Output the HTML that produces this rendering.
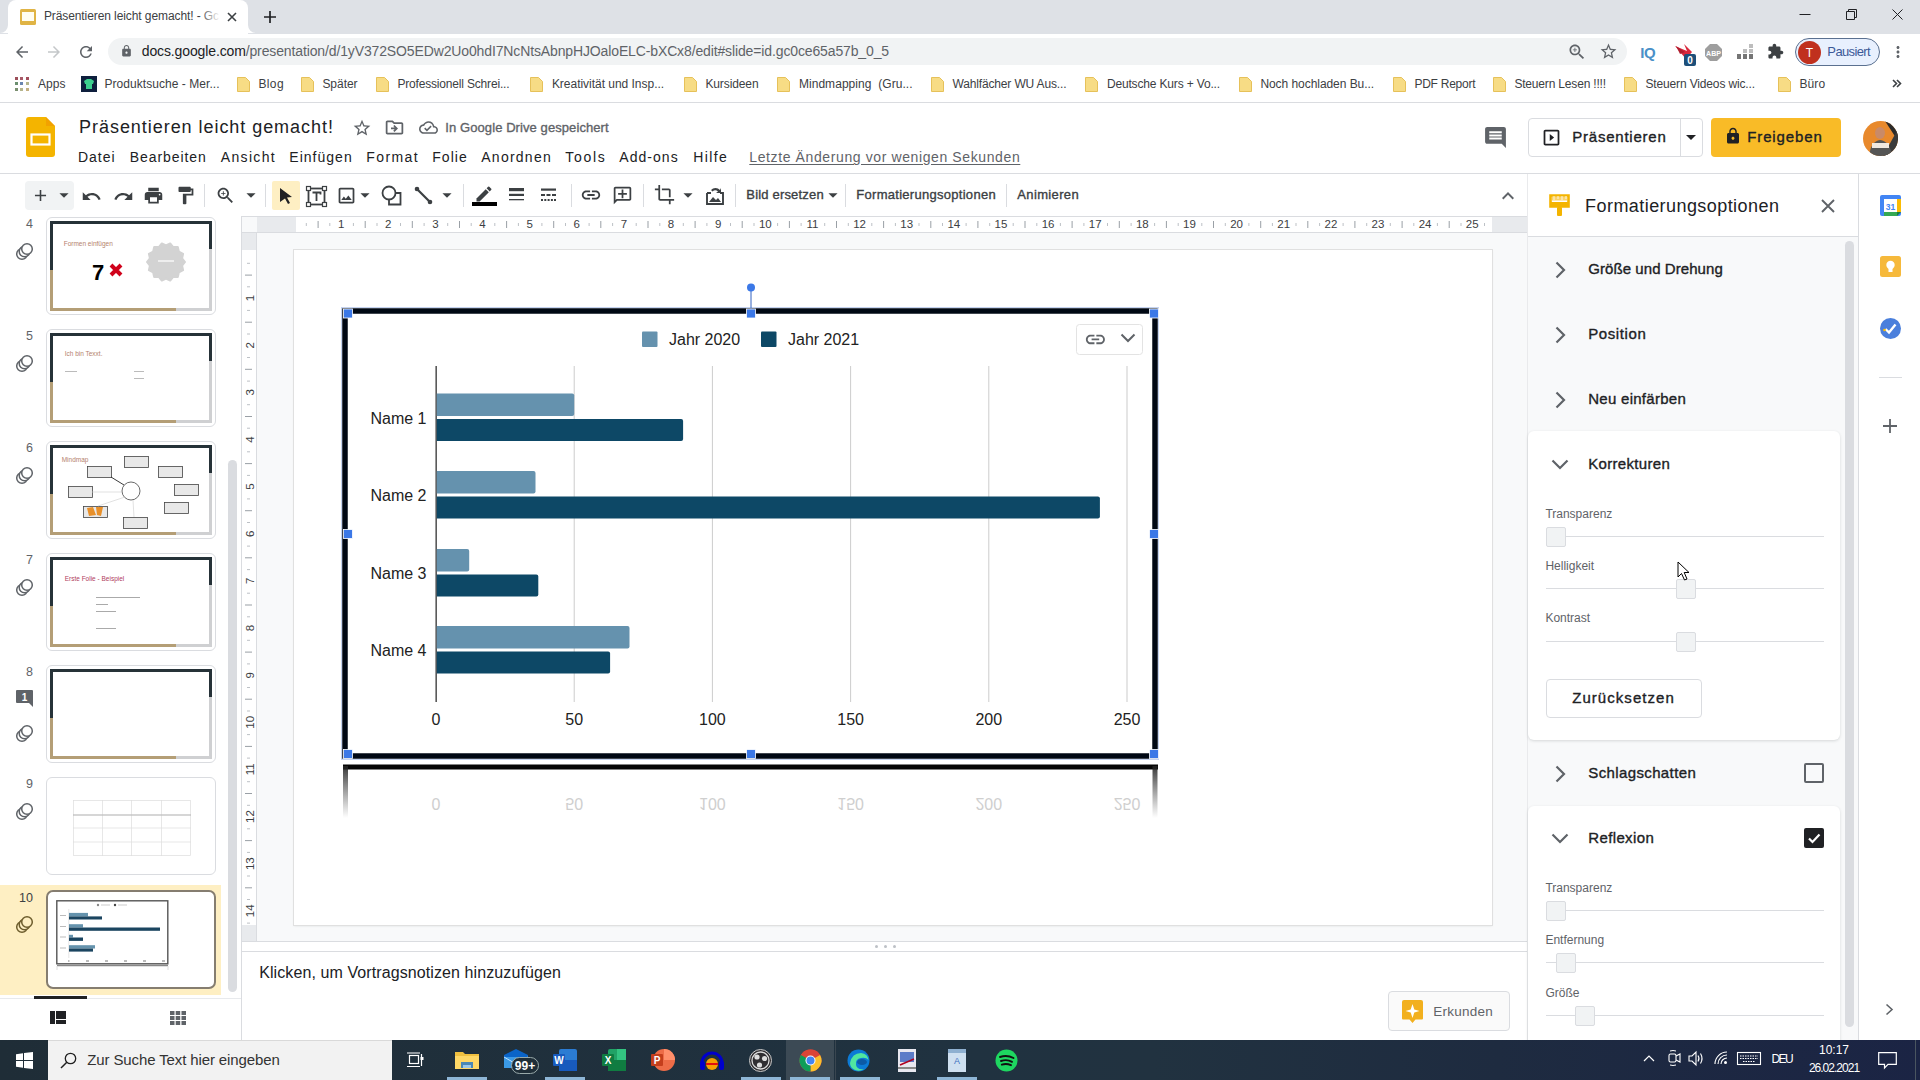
<!DOCTYPE html>
<html><head><meta charset="utf-8"><title>Slides</title>
<style>
*{margin:0;padding:0;box-sizing:border-box}
html,body{width:1920px;height:1080px;overflow:hidden;background:#fff;font-family:"Liberation Sans",sans-serif}
.a{position:absolute}
.t{position:absolute;white-space:pre;line-height:1.117em;font-family:"Liberation Sans",sans-serif}
svg{position:absolute;overflow:visible}
</style></head><body>

<div class="a" style="left:0px;top:0px;width:1920px;height:34px;background:#dee1e6"></div>
<div class="a" style="left:8px;top:0px;width:240px;height:34px;background:#fff;border-radius:8px 8px 0 0"></div>
<svg style="left:0px;top:25px" width="8" height="8"><path d="M8 0 V8 H0 A8 8 0 0 0 8 0z" fill="#fff"/></svg>
<svg style="left:248px;top:25px" width="8" height="8"><path d="M0 0 V8 H8 A8 8 0 0 1 0 0z" fill="#fff"/></svg>
<div class="a" style="left:20px;top:9px;width:16px;height:16px;background:#e0b445;border-radius:1.5px"></div>
<div class="a" style="left:22px;top:12px;width:12px;height:9px;background:#fffdf0"></div>
<div class="t" style='left:43.90px;top:10.14px;font-size:12px;color:#3c4043;letter-spacing:-0.090px;'>Präsentieren leicht gemacht! - Gc</div>
<div class="a" style="left:200px;top:8px;width:22px;height:18px;background:linear-gradient(90deg,rgba(255,255,255,0),#fff 90%)"></div>
<svg style="left:227px;top:12px" width="10" height="10" viewBox="0 0 10 10"><path d="M1 1L9 9M9 1L1 9" stroke="#3c4043" stroke-width="1.6"/></svg>
<svg style="left:263px;top:10px" width="14" height="14" viewBox="0 0 14 14"><path d="M7 1V13M1 7H13" stroke="#202124" stroke-width="1.7"/></svg>
<svg style="left:1799px;top:9px" width="13" height="11" viewBox="0 0 13 11"><path d="M0.5 5.5H11.5" stroke="#202124" stroke-width="1"/></svg>
<svg style="left:1846px;top:9px" width="11" height="11" viewBox="0 0 11 11"><path d="M0.5 2.5H8.5V10.5H0.5Z M2.5 2.5V0.5H10.5V8.5H8.5" stroke="#202124" stroke-width="1" fill="none"/></svg>
<svg style="left:1892px;top:9px" width="11" height="11" viewBox="0 0 11 11"><path d="M0.5 0.5L10.5 10.5M10.5 0.5L0.5 10.5" stroke="#202124" stroke-width="1"/></svg>
<svg style="left:13px;top:43px" width="18" height="18" viewBox="0 0 24 24"><path d="M20 11H7.83l5.59-5.59L12 4l-8 8 8 8 1.41-1.41L7.83 13H20v-2z" fill="#5f6368" /></svg>
<svg style="left:45px;top:43px" width="18" height="18" viewBox="0 0 24 24"><path d="M12 4l-1.41 1.41L16.17 11H4v2h12.17l-5.58 5.59L12 20l8-8z" fill="#c4c7c9" /></svg>
<svg style="left:77px;top:43px" width="18" height="18" viewBox="0 0 24 24"><path d="M17.65 6.35C16.2 4.9 14.21 4 12 4c-4.42 0-7.99 3.58-7.99 8s3.57 8 7.99 8c3.73 0 6.84-2.550 7.73-6h-2.08c-.82 2.33-3.04 4-5.65 4-3.31 0-6-2.69-6-6s2.69-6 6-6c1.66 0 3.14.69 4.22 1.78L13 11h7V4l-2.35 2.35z" fill="#5f6368" /></svg>
<div class="a" style="left:108px;top:38px;width:1519px;height:27px;background:#f1f3f4;border-radius:14px"></div>
<svg style="left:120px;top:44px" width="13" height="14" viewBox="0 0 24 24"><path d="M18 8h-1V6c0-2.76-2.24-5-5-5S7 3.24 7 6v2H6c-1.1 0-2 .9-2 2v10c0 1.1.9 2 2 2h12c1.1 0 2-.9 2-2V10c0-1.1-.9-2-2-2zm-6 9c-1.1 0-2-.9-2-2s.9-2 2-2 2 .9 2 2-.9 2-2 2zm3.1-9H8.9V6c0-1.71 1.39-3.1 3.1-3.1 1.71 0 3.1 1.39 3.1 3.1v2z" fill="#5f6368" /></svg>
<div class="t" style='left:141.80px;top:43.83px;font-size:14px;color:#5f6368;letter-spacing:-0.129px;'><span style="color:#202124">docs.google.com</span>/presentation/d/1yV372SO5EDw2Uo0hdI7NcNtsAbnpHJOaloELC-bXCx8/edit#slide=id.gc0ce65a57b_0_5</div>
<svg style="left:1567px;top:42px" width="20" height="20" viewBox="0 0 24 24"><path d="M15.5 14h-.79l-.28-.27C15.41 12.59 16 11.11 16 9.5 16 5.910 13.09 3 9.5 3S3 5.91 3 9.5 5.91 16 9.5 16c1.61 0 3.09-.59 4.23-1.57l.27.28v.79l5 4.99L20.49 19l-4.99-5zm-6 0C7.01 14 5 11.99 5 9.5S7.01 5 9.5 5 14 7.01 14 9.5 11.99 14 9.5 14zm2.5-4h-2v2H9v-2H7V9h2V7h1v2h2v1z" fill="#5f6368" /></svg>
<svg style="left:1599px;top:42px" width="19" height="19" viewBox="0 0 24 24"><path d="M22 9.24l-7.19-.62L12 2 9.19 8.63 2 9.24l5.46 4.73L5.82 21 12 17.27 18.18 21l-1.63-7.03L22 9.24zM12 15.4l-3.76 2.270 1-4.28-3.32-2.88 4.38-.38L12 6.1l1.71 4.04 4.38.38-3.32 2.88 1 4.28L12 15.4z" fill="#5f6368" /></svg>
<div class="t" style='left:1640.25px;top:44.92px;font-size:15px;color:#4a90c8;font-weight:700;letter-spacing:-0.344px;'>IQ</div>
<svg style="left:1673px;top:42px" width="26" height="26" viewBox="0 0 26 26"><path d="M2 4 L14 9 L11 2 L19 10 L13 17 Z" fill="#d9283c"/><path d="M3 4 L12 10 L7 12 Z" fill="#b01e2f"/><rect x="11" y="12" width="12" height="12" rx="2" fill="#1d4f79"/><text x="17" y="22" font-size="10" font-weight="700" fill="#fff" text-anchor="middle" font-family="Liberation Sans">0</text></svg>
<svg style="left:1705px;top:44px" width="17" height="17" viewBox="0 0 17 17"><path d="M5 0H12L17 5V12L12 17H5L0 12V5Z" fill="#9e9e9e"/><text x="8.5" y="11.5" font-size="7" font-weight="700" fill="#fff" text-anchor="middle" font-family="Liberation Sans">ABP</text></svg>
<svg style="left:1737px;top:44px" width="17" height="16" viewBox="0 0 17 16"><rect x="0" y="10" width="4" height="5" fill="#757575"/><rect x="6" y="10" width="4" height="5" fill="#757575"/><rect x="12" y="10" width="4" height="5" fill="#757575"/><rect x="6" y="5" width="4" height="4" fill="#bdbdbd"/><rect x="12" y="5" width="4" height="4" fill="#bdbdbd"/><rect x="12" y="0" width="4" height="4" fill="#bdbdbd"/></svg>
<svg style="left:1767px;top:43px" width="17" height="17" viewBox="0 0 24 24"><path d="M20.5 11H19V7c0-1.1-.9-2-2-2h-4V3.5C13 2.12 11.88 1 10.5 1S8 2.12 8 3.5V5H4c-1.1 0-1.99.9-1.99 2v3.8H3.5c1.49 0 2.7 1.21 2.7 2.7s-1.21 2.7-2.7 2.7H2V20c0 1.1.9 2 2 2h3.8v-1.5c0-1.49 1.21-2.7 2.7-2.7 1.49 0 2.7 1.21 2.7 2.7V22H17c1.1 0 2-.9 2-2v-4h1.5c1.38 0 2.5-1.12 2.5-2.5S21.88 11 20.5 11z" fill="#3c4043" /></svg>
<div class="a" style="left:1795px;top:38px;width:85px;height:28px;border:1px solid #5a7090;border-radius:14px;background:#e8f0fe"></div>
<div class="a" style="left:1798px;top:41px;width:23px;height:23px;border-radius:50%;background:#c0301e"></div>
<div class="t" style='left:1805.83px;top:46.64px;font-size:12px;color:#fff;'>T</div>
<div class="t" style='left:1827.35px;top:45.23px;font-size:13px;color:#3b5998;letter-spacing:-0.629px;'>Pausiert</div>
<svg style="left:1889px;top:43px" width="18" height="18" viewBox="0 0 24 24"><path d="M12 8c1.1 0 2-.9 2-2s-.9-2-2-2-2 .9-2 2 .9 2 2 2zm0 2c-1.1 0-2 .9-2 2s.9 2 2 2 2-.9 2-2-.9-2-2-2zm0 6c-1.1 0-2 .9-2 2s.9 2 2 2 2-.9 2-2-.9-2-2-2z" fill="#5f6368" /></svg>
<div class="a" style="left:0px;top:102px;width:1920px;height:1px;background:#dadce0"></div>
<div class="a" style="left:15px;top:77px;width:3px;height:3px;background:#9c4f5a"></div>
<div class="a" style="left:20px;top:77px;width:3px;height:3px;background:#a85a68"></div>
<div class="a" style="left:26px;top:77px;width:3px;height:3px;background:#a24e5c"></div>
<div class="a" style="left:15px;top:82px;width:3px;height:3px;background:#6b8f6f"></div>
<div class="a" style="left:20px;top:82px;width:3px;height:3px;background:#6a86b0"></div>
<div class="a" style="left:26px;top:82px;width:3px;height:3px;background:#b5b58c"></div>
<div class="a" style="left:15px;top:88px;width:3px;height:3px;background:#7a8f6f"></div>
<div class="a" style="left:20px;top:88px;width:3px;height:3px;background:#b5b58c"></div>
<div class="a" style="left:26px;top:88px;width:3px;height:3px;background:#c4b080"></div>
<div class="t" style='left:37.90px;top:77.64px;font-size:12px;color:#3c4043;letter-spacing:0.114px;'>Apps</div>
<div class="a" style="left:81px;top:76px;width:16px;height:16px;background:#0e1f3d"></div>
<svg style="left:81px;top:76px" width="16" height="16" viewBox="0 0 16 16"><path d="M3 5 L6 3 H10 L13 5 L12 8 H11 V13 H5 V8 H4Z" fill="#3ccf8e"/></svg>
<div class="t" style='left:104.40px;top:77.64px;font-size:12px;color:#3c4043;letter-spacing:0.058px;'>Produktsuche - Mer...</div>
<svg style="left:237px;top:77px" width="13" height="15" viewBox="0 0 13 15"><path d="M0.5 0.5H8.5L12.5 4.5V14.5H0.5Z" fill="#f7dc85" stroke="#e6c15a" stroke-width="1"/></svg>
<div class="t" style='left:258.40px;top:77.64px;font-size:12px;color:#3c4043;letter-spacing:0.390px;'>Blog</div>
<svg style="left:301px;top:77px" width="13" height="15" viewBox="0 0 13 15"><path d="M0.5 0.5H8.5L12.5 4.5V14.5H0.5Z" fill="#f7dc85" stroke="#e6c15a" stroke-width="1"/></svg>
<div class="t" style='left:322.40px;top:77.64px;font-size:12px;color:#3c4043;letter-spacing:-0.032px;'>Später</div>
<svg style="left:376px;top:77px" width="13" height="15" viewBox="0 0 13 15"><path d="M0.5 0.5H8.5L12.5 4.5V14.5H0.5Z" fill="#f7dc85" stroke="#e6c15a" stroke-width="1"/></svg>
<div class="t" style='left:397.40px;top:77.64px;font-size:12px;color:#3c4043;letter-spacing:-0.176px;'>Professionell Schrei...</div>
<svg style="left:530px;top:77px" width="13" height="15" viewBox="0 0 13 15"><path d="M0.5 0.5H8.5L12.5 4.5V14.5H0.5Z" fill="#f7dc85" stroke="#e6c15a" stroke-width="1"/></svg>
<div class="t" style='left:551.90px;top:77.64px;font-size:12px;color:#3c4043;letter-spacing:-0.024px;'>Kreativität und Insp...</div>
<svg style="left:684px;top:77px" width="13" height="15" viewBox="0 0 13 15"><path d="M0.5 0.5H8.5L12.5 4.5V14.5H0.5Z" fill="#f7dc85" stroke="#e6c15a" stroke-width="1"/></svg>
<div class="t" style='left:705.40px;top:77.64px;font-size:12px;color:#3c4043;letter-spacing:-0.106px;'>Kursideen</div>
<svg style="left:777px;top:77px" width="13" height="15" viewBox="0 0 13 15"><path d="M0.5 0.5H8.5L12.5 4.5V14.5H0.5Z" fill="#f7dc85" stroke="#e6c15a" stroke-width="1"/></svg>
<div class="t" style='left:798.90px;top:77.64px;font-size:12px;color:#3c4043;letter-spacing:0.052px;'>Mindmapping  (Gru...</div>
<svg style="left:931px;top:77px" width="13" height="15" viewBox="0 0 13 15"><path d="M0.5 0.5H8.5L12.5 4.5V14.5H0.5Z" fill="#f7dc85" stroke="#e6c15a" stroke-width="1"/></svg>
<div class="t" style='left:952.40px;top:77.64px;font-size:12px;color:#3c4043;letter-spacing:-0.144px;'>Wahlfächer WU Aus...</div>
<svg style="left:1085px;top:77px" width="13" height="15" viewBox="0 0 13 15"><path d="M0.5 0.5H8.5L12.5 4.5V14.5H0.5Z" fill="#f7dc85" stroke="#e6c15a" stroke-width="1"/></svg>
<div class="t" style='left:1106.90px;top:77.64px;font-size:12px;color:#3c4043;letter-spacing:-0.160px;'>Deutsche Kurs + Vo...</div>
<svg style="left:1239px;top:77px" width="13" height="15" viewBox="0 0 13 15"><path d="M0.5 0.5H8.5L12.5 4.5V14.5H0.5Z" fill="#f7dc85" stroke="#e6c15a" stroke-width="1"/></svg>
<div class="t" style='left:1260.40px;top:77.64px;font-size:12px;color:#3c4043;letter-spacing:-0.055px;'>Noch hochladen Bu...</div>
<svg style="left:1393px;top:77px" width="13" height="15" viewBox="0 0 13 15"><path d="M0.5 0.5H8.5L12.5 4.5V14.5H0.5Z" fill="#f7dc85" stroke="#e6c15a" stroke-width="1"/></svg>
<div class="t" style='left:1414.40px;top:77.64px;font-size:12px;color:#3c4043;letter-spacing:-0.240px;'>PDF Report</div>
<svg style="left:1493px;top:77px" width="13" height="15" viewBox="0 0 13 15"><path d="M0.5 0.5H8.5L12.5 4.5V14.5H0.5Z" fill="#f7dc85" stroke="#e6c15a" stroke-width="1"/></svg>
<div class="t" style='left:1514.40px;top:77.64px;font-size:12px;color:#3c4043;letter-spacing:-0.178px;'>Steuern Lesen !!!!</div>
<svg style="left:1624px;top:77px" width="13" height="15" viewBox="0 0 13 15"><path d="M0.5 0.5H8.5L12.5 4.5V14.5H0.5Z" fill="#f7dc85" stroke="#e6c15a" stroke-width="1"/></svg>
<div class="t" style='left:1645.40px;top:77.64px;font-size:12px;color:#3c4043;letter-spacing:-0.141px;'>Steuern Videos wic...</div>
<svg style="left:1778px;top:77px" width="13" height="15" viewBox="0 0 13 15"><path d="M0.5 0.5H8.5L12.5 4.5V14.5H0.5Z" fill="#f7dc85" stroke="#e6c15a" stroke-width="1"/></svg>
<div class="t" style='left:1799.40px;top:77.64px;font-size:12px;color:#3c4043;letter-spacing:0.114px;'>Büro</div>
<svg style="left:1892px;top:79px" width="10" height="9" viewBox="0 0 10 9"><path d="M1 1L4.5 4.5L1 8M5 1L8.5 4.5L5 8" stroke="#3c4043" stroke-width="1.6" fill="none"/></svg>
<svg style="left:26px;top:117px" width="29" height="40" viewBox="0 0 29 40"><path d="M0 3 Q0 0 3 0 H20 L29 9 V37 Q29 40 26 40 H3 Q0 40 0 37Z" fill="#f4b400"/><path d="M20 0 V9 H29Z" fill="#f09300" opacity="0.55"/><rect x="5.5" y="17.5" width="18" height="10" fill="none" stroke="#fff" stroke-width="2.2"/></svg>
<div class="t" style='left:79.10px;top:117.01px;font-size:18px;color:#202124;letter-spacing:0.951px;'>Präsentieren leicht gemacht!</div>
<svg style="left:352px;top:118px" width="20" height="20" viewBox="0 0 24 24"><path d="M22 9.24l-7.19-.62L12 2 9.19 8.63 2 9.24l5.46 4.73L5.82 21 12 17.27 18.18 21l-1.63-7.03L22 9.24zM12 15.4l-3.76 2.270 1-4.28-3.32-2.88 4.38-.38L12 6.1l1.71 4.04 4.38.38-3.32 2.88 1 4.28L12 15.4z" fill="#5f6368" /></svg>
<svg style="left:384px;top:117px" width="21" height="21" viewBox="0 0 24 24"><path d="M20 6h-8l-2-2H4c-1.1 0-1.99.9-1.99 2L2 18c0 1.1.9 2 2 2h16c1.1 0 2-.9 2-2V8c0-1.1-.9-2-2-2zm0 12H4V6h5.17l2 2H20v10zm-7.84-6H8v2h4.16l-1.59 1.59L11.99 17 16 13.01 11.99 9l-1.41 1.41L12.16 12z" fill="#5f6368" /></svg>
<svg style="left:419px;top:118px" width="19" height="19" viewBox="0 0 24 24"><path d="M19.35 10.04C18.67 6.59 15.64 4 12 4 9.11 4 6.6 5.64 5.35 8.04 2.34 8.36 0 10.91 0 14c0 3.31 2.69 6 6 6h13c2.76 0 5-2.24 5-5 0-2.64-2.05-4.78-4.65-4.96zM19 18H6c-2.21 0-4-1.79-4-4 0-2.05 1.53-3.76 3.56-3.97l1.07-.11.5-.95C8.08 7.14 9.94 6 12 6c2.62 0 4.88 1.86 5.39 4.43l.3 1.5 1.53.11c1.56.1 2.78 1.41 2.78 2.96 0 1.65-1.35 3-3 3zm-9-3.82l-2.09-2.09L6.5 13.5 10 17l6.01-6.01-1.41-1.41z" fill="#5f6368" /></svg>
<div class="t" style='left:445.35px;top:121.04px;font-size:13px;color:#5f6368;-webkit-text-stroke:0.35px #5f6368;letter-spacing:0.082px;'>In Google Drive gespeichert</div>
<div class="t" style='left:77.90px;top:150.13px;font-size:14px;color:#202124;letter-spacing:1.028px;'>Datei</div>
<div class="t" style='left:129.80px;top:150.13px;font-size:14px;color:#202124;letter-spacing:0.909px;'>Bearbeiten</div>
<div class="t" style='left:220.80px;top:150.13px;font-size:14px;color:#202124;letter-spacing:1.330px;'>Ansicht</div>
<div class="t" style='left:289.30px;top:150.13px;font-size:14px;color:#202124;letter-spacing:1.017px;'>Einfügen</div>
<div class="t" style='left:366.30px;top:150.13px;font-size:14px;color:#202124;letter-spacing:1.411px;'>Format</div>
<div class="t" style='left:432.30px;top:150.13px;font-size:14px;color:#202124;letter-spacing:1.010px;'>Folie</div>
<div class="t" style='left:481.30px;top:150.13px;font-size:14px;color:#202124;letter-spacing:1.240px;'>Anordnen</div>
<div class="t" style='left:565.30px;top:150.13px;font-size:14px;color:#202124;letter-spacing:1.678px;'>Tools</div>
<div class="t" style='left:619.30px;top:150.13px;font-size:14px;color:#202124;letter-spacing:1.041px;'>Add-ons</div>
<div class="t" style='left:693.30px;top:150.13px;font-size:14px;color:#202124;letter-spacing:1.346px;'>Hilfe</div>
<div class="t" style='left:749.30px;top:150.13px;font-size:14px;color:#5f6368;letter-spacing:0.609px;text-decoration:underline;text-underline-offset:2px'>Letzte Änderung vor wenigen Sekunden</div>
<svg style="left:1483px;top:125px" width="25" height="25" viewBox="0 0 24 24"><path d="M21.99 4c0-1.1-.89-2-1.99-2H4c-1.1 0-2 .9-2 2v12c0 1.1.9 2 2 2h14l4 4-.01-18zM18 14H6v-2h12v2zm0-3H6V9h12v2zm0-3H6V6h12v2z" fill="#5f6368" /></svg>
<div class="a" style="left:1528px;top:118px;width:175px;height:39px;border:1px solid #dadce0;border-radius:4px;background:#fff"></div>
<div class="a" style="left:1680px;top:119px;width:1px;height:37px;background:#dadce0"></div>
<svg style="left:1541px;top:127px" width="21" height="21" viewBox="0 0 24 24"><path d="M10 8v8l5-4-5-4zm9-5H5c-1.1 0-2 .9-2 2v14c0 1.1.9 2 2 2h14c1.1 0 2-.9 2-2V5c0-1.1-.9-2-2-2zm0 16H5V5h14v14z" fill="#202124" /></svg>
<div class="t" style='left:1572.25px;top:129.43px;font-size:15px;color:#202124;-webkit-text-stroke:0.35px #202124;letter-spacing:0.767px;'>Präsentieren</div>
<svg style="left:1679px;top:125px" width="24" height="24" viewBox="0 0 24 24"><path d="M7 10l5 5 5-5z" fill="#202124" /></svg>
<div class="a" style="left:1711px;top:118px;width:130px;height:39px;border-radius:4px;background:#f9bb27"></div>
<svg style="left:1724px;top:127px" width="18" height="18" viewBox="0 0 24 24"><path d="M18 8h-1V6c0-2.76-2.24-5-5-5S7 3.24 7 6v2H6c-1.1 0-2 .9-2 2v10c0 1.1.9 2 2 2h12c1.1 0 2-.9 2-2V10c0-1.1-.9-2-2-2zm-6 9c-1.1 0-2-.9-2-2s.9-2 2-2 2 .9 2 2-.9 2-2 2zm3.1-9H8.9V6c0-1.71 1.39-3.1 3.1-3.1 1.71 0 3.1 1.39 3.1 3.1v2z" fill="#202124" /></svg>
<div class="t" style='left:1747.25px;top:129.43px;font-size:15px;color:#202124;-webkit-text-stroke:0.35px #202124;letter-spacing:0.869px;'>Freigeben</div>
<svg style="left:1863px;top:121px" width="35" height="35" viewBox="0 0 35 35"><defs><clipPath id="av"><circle cx="17.5" cy="17.5" r="17.5"/></clipPath></defs><g clip-path="url(#av)"><rect width="35" height="35" fill="#e8892c"/><path d="M22 0 L35 0 L35 20 Z" fill="#2a2a2a"/><path d="M35 8 L35 35 L20 35 Z" fill="#3a3a3a"/><ellipse cx="17" cy="12" rx="5" ry="6" fill="#c98a68"/><path d="M6 35 Q8 20 17 19 Q27 20 29 35Z" fill="#555"/><rect x="9" y="22" width="17" height="5" fill="#f0e8e0"/></g></svg>
<div class="a" style="left:0px;top:173px;width:1920px;height:1px;background:#dadce0"></div>
<div class="a" style="left:25px;top:181px;width:49px;height:29px;background:#f1f3f4;border-radius:4px"></div>
<svg style="left:31px;top:186px" width="19" height="19" viewBox="0 0 24 24"><path d="M19 13h-6v6h-2v-6H5v-2h6V5h2v6h6v2z" fill="#3c4043" /></svg>
<svg style="left:53px;top:184px" width="22" height="22" viewBox="0 0 24 24"><path d="M7 10l5 5 5-5z" fill="#3c4043" /></svg>
<svg style="left:81px;top:186px" width="21" height="21" viewBox="0 0 24 24"><path d="M12.5 8c-2.65 0-5.05.99-6.9 2.6L2 7v9h9l-3.62-3.62c1.39-1.16 3.16-1.88 5.12-1.88 3.54 0 6.55 2.31 7.6 5.5l2.37-.78C21.08 11.03 17.15 8 12.5 8z" fill="#3c4043" /></svg>
<svg style="left:113px;top:186px" width="21" height="21" viewBox="0 0 24 24"><path d="M18.4 10.6C16.55 8.99 14.15 8 11.5 8c-4.65 0-8.58 3.03-9.96 7.22L3.9 16c1.05-3.19 4.05-5.5 7.6-5.5 1.95 0 3.73.72 5.12 1.88L13 16h9V7l-3.6 3.6z" fill="#3c4043" /></svg>
<svg style="left:143px;top:185px" width="21" height="21" viewBox="0 0 24 24"><path d="M19 8H5c-1.66 0-3 1.34-3 3v6h4v4h12v-4h4v-6c0-1.66-1.34-3-3-3zm-3 11H8v-5h8v5zm3-7c-.55 0-1-.45-1-1s.45-1 1-1 1 .45 1 1-.45 1-1 1zm-1-9H6v4h12V3z" fill="#3c4043" /></svg>
<svg style="left:175px;top:185px" width="21" height="21" viewBox="0 0 24 24"><path d="M18 4V3c0-.55-.45-1-1-1H5c-.55 0-1 .45-1 1v4c0 .55.45 1 1 1h12c.55 0 1-.45 1-1V6h1v4H9v11c0 .55.45 1 1 1h2c.55 0 1-.45 1-1v-9h8V4h-3z" fill="#3c4043" /></svg>
<div class="a" style="left:204px;top:184px;width:1px;height:23px;background:#dadce0"></div>
<svg style="left:215px;top:185px" width="21" height="21" viewBox="0 0 24 24"><path d="M15.5 14h-.79l-.28-.27C15.41 12.59 16 11.11 16 9.5 16 5.910 13.09 3 9.5 3S3 5.91 3 9.5 5.91 16 9.5 16c1.61 0 3.09-.59 4.23-1.57l.27.28v.79l5 4.99L20.49 19l-4.99-5zm-6 0C7.01 14 5 11.99 5 9.5S7.01 5 9.5 5 14 7.01 14 9.5 11.99 14 9.5 14zm2.5-4h-2v2H9v-2H7V9h2V7h1v2h2v1z" fill="#3c4043" /></svg>
<svg style="left:240px;top:184px" width="22" height="22" viewBox="0 0 24 24"><path d="M7 10l5 5 5-5z" fill="#3c4043" /></svg>
<div class="a" style="left:265px;top:184px;width:1px;height:23px;background:#dadce0"></div>
<div class="a" style="left:272px;top:181px;width:28px;height:29px;background:#feefc3;border-radius:2px"></div>
<svg style="left:279px;top:187px" width="14" height="17" viewBox="0 0 14 17"><path d="M1 1 L13 10 L8 10.5 L11 16 L9 17 L6 11.5 L1 15Z" fill="#202124"/></svg>
<svg style="left:306px;top:186px" width="21" height="21" viewBox="0 0 21 21"><rect x="2.5" y="2.5" width="16" height="16" fill="none" stroke="#3c4043" stroke-width="1.8"/><rect x="0.5" y="0.5" width="4" height="4" fill="#fff" stroke="#3c4043" stroke-width="1.2"/><rect x="16.5" y="0.5" width="4" height="4" fill="#fff" stroke="#3c4043" stroke-width="1.2"/><rect x="0.5" y="16.5" width="4" height="4" fill="#fff" stroke="#3c4043" stroke-width="1.2"/><rect x="16.5" y="16.5" width="4" height="4" fill="#fff" stroke="#3c4043" stroke-width="1.2"/><path d="M6.5 6.5H14.5V8.5M10.5 6.5V15" stroke="#3c4043" stroke-width="1.8" fill="none"/></svg>
<svg style="left:336px;top:185px" width="21" height="21" viewBox="0 0 24 24"><path d="M19 5v14H5V5h14m0-2H5c-1.1 0-2 .9-2 2v14c0 1.1.9 2 2 2h14c1.1 0 2-.9 2-2V5c0-1.1-.9-2-2-2zm-4.86 8.86l-3 3.87L9 13.14 6 17h12l-3.86-5.14z" fill="#3c4043" /></svg>
<svg style="left:354px;top:184px" width="22" height="22" viewBox="0 0 24 24"><path d="M7 10l5 5 5-5z" fill="#3c4043" /></svg>
<svg style="left:381px;top:185px" width="21" height="21" viewBox="0 0 21 21"><circle cx="8" cy="8" r="6.5" fill="none" stroke="#3c4043" stroke-width="1.8"/><path d="M8 14.5 V19.5 H19.5 V8 H14.5" fill="none" stroke="#3c4043" stroke-width="1.8"/></svg>
<svg style="left:414px;top:186px" width="19" height="19" viewBox="0 0 19 19"><path d="M3 3 L16 16" stroke="#3c4043" stroke-width="2.2"/><circle cx="3" cy="3" r="2.3" fill="#3c4043"/><circle cx="16" cy="16" r="2.3" fill="#3c4043"/></svg>
<svg style="left:436px;top:184px" width="22" height="22" viewBox="0 0 24 24"><path d="M7 10l5 5 5-5z" fill="#3c4043" /></svg>
<div class="a" style="left:463px;top:184px;width:1px;height:23px;background:#dadce0"></div>
<svg style="left:474px;top:184px" width="20" height="20" viewBox="0 0 24 24"><path d="M3 17.25V21h3.75L17.81 9.94l-3.75-3.75L3 17.25z" fill="#3c4043" /></svg>
<svg style="left:474px;top:184px" width="20" height="20" viewBox="0 0 24 24"><path d="M20.71 7.04a.996.996 0 0 0 0-1.41l-2.34-2.34a.996.996 0 0 0-1.41 0l-1.83 1.83 3.75 3.75 1.83-1.83z" fill="#3c4043"/></svg>
<div class="a" style="left:472px;top:202px;width:25px;height:4px;background:#000"></div>
<svg style="left:506px;top:184px" width="21" height="21" viewBox="0 0 21 21"><rect x="3" y="4" width="15" height="3.2" fill="#3c4043"/><rect x="3" y="9.8" width="15" height="2.2" fill="#3c4043"/><rect x="3" y="15" width="15" height="1.3" fill="#3c4043"/></svg>
<svg style="left:538px;top:184px" width="21" height="21" viewBox="0 0 21 21"><rect x="3" y="4.5" width="15" height="2.2" fill="#3c4043"/><g fill="#3c4043"><rect x="3" y="10" width="4" height="2"/><rect x="8.5" y="10" width="4" height="2"/><rect x="14" y="10" width="4" height="2"/><rect x="3" y="15" width="2" height="2"/><rect x="6.3" y="15" width="2" height="2"/><rect x="9.6" y="15" width="2" height="2"/><rect x="12.9" y="15" width="2" height="2"/><rect x="16" y="15" width="2" height="2"/></g></svg>
<div class="a" style="left:571px;top:184px;width:1px;height:23px;background:#dadce0"></div>
<svg style="left:580px;top:184px" width="22" height="22" viewBox="0 0 24 24"><path d="M3.9 12c0-1.71 1.39-3.1 3.1-3.1h4V7H7c-2.76 0-5 2.24-5 5s2.24 5 5 5h4v-1.9H7c-1.71 0-3.1-1.39-3.1-3.1zM8 13h8v-2H8v2zm9-6h-4v1.9h4c1.71 0 3.1 1.39 3.1 3.1s-1.39 3.1-3.1 3.1h-4V17h4c2.76 0 5-2.24 5-5s-2.24-5-5-5z" fill="#3c4043" /></svg>
<svg style="left:612px;top:185px" width="21" height="21" viewBox="0 0 24 24"><g transform="translate(24,0) scale(-1,1)"><path d="M22 4c0-1.1-.9-2-2-2H4c-1.1 0-1.99.9-1.99 2L2 16c0 1.1.9 2 2 2h14l4 4V4zm-2 13.17L18.83 16H4V4h16v13.17zM13 5h-2v4H7v2h4v4h2v-4h4V9h-4z" fill="#3c4043"/></g></svg>
<div class="a" style="left:643px;top:184px;width:1px;height:23px;background:#dadce0"></div>
<svg style="left:654px;top:184px" width="21" height="21" viewBox="0 0 24 24"><path d="M17 15h2V7c0-1.1-.9-2-2-2H9v2h8v8zM7 17V1H5v4H1v2h4v10c0 1.1.9 2 2 2h10v4h2v-4h4v-2H7z" fill="#3c4043" /></svg>
<svg style="left:677px;top:184px" width="22" height="22" viewBox="0 0 24 24"><path d="M7 10l5 5 5-5z" fill="#3c4043" /></svg>
<svg style="left:704px;top:185px" width="21" height="21" viewBox="0 0 21 21"><path d="M3 8 V19 H19 V8 H16 M3 8 H7" fill="none" stroke="#3c4043" stroke-width="1.9"/><path d="M5 17 L9 12 L12 15 L14 13 L17 17Z" fill="#3c4043"/><path d="M7 5 A6 6 0 0 1 16 5 L17 3 V8 H12 L14 6.5 A4 4 0 0 0 8.5 6.5" fill="#3c4043"/></svg>
<div class="a" style="left:735px;top:184px;width:1px;height:23px;background:#dadce0"></div>
<div class="t" style='left:746.35px;top:188.24px;font-size:13px;color:#3c4043;-webkit-text-stroke:0.35px #3c4043;letter-spacing:0.179px;'>Bild ersetzen</div>
<svg style="left:822px;top:184px" width="22" height="22" viewBox="0 0 24 24"><path d="M7 10l5 5 5-5z" fill="#3c4043" /></svg>
<div class="a" style="left:845px;top:184px;width:1px;height:23px;background:#dadce0"></div>
<div class="t" style='left:856.35px;top:188.24px;font-size:13px;color:#3c4043;-webkit-text-stroke:0.35px #3c4043;letter-spacing:0.280px;'>Formatierungsoptionen</div>
<div class="a" style="left:1006px;top:184px;width:1px;height:23px;background:#dadce0"></div>
<div class="t" style='left:1017.35px;top:188.24px;font-size:13px;color:#3c4043;-webkit-text-stroke:0.35px #3c4043;letter-spacing:0.346px;'>Animieren</div>
<svg style="left:1496px;top:184px" width="24" height="24" viewBox="0 0 24 24"><path d="M12 8l-6 6 1.41 1.41L12 10.83l4.59 4.58L18 14z" fill="#5f6368" /></svg>
<div class="a" style="left:242px;top:216px;width:1286px;height:725px;background:#f8f9fa"></div>
<div class="a" style="left:242px;top:216px;width:1286px;height:17px;background:#fff;border-top:1px solid #dadce0;border-bottom:1px solid #dadce0"></div>
<div class="a" style="left:257px;top:217px;width:39px;height:15px;background:#e8eaed"></div>
<div class="a" style="left:1492px;top:217px;width:36px;height:15px;background:#e8eaed"></div>
<div class="a" style="left:242px;top:217px;width:15px;height:15px;background:#f8f9fa"></div>
<div class="a" style="left:241px;top:233px;width:16px;height:708px;background:#fff;border-right:1px solid #dadce0;border-left:1px solid #dadce0"></div>
<div class="a" style="left:242px;top:233px;width:14px;height:17px;background:#e8eaed"></div>
<div class="a" style="left:242px;top:925px;width:14px;height:16px;background:#e8eaed"></div>
<svg style="left:0;top:0" width="1920" height="1080"><rect x="305.8" y="223" width="1" height="3" fill="#bdc1c6"/><rect x="317.6" y="221" width="1" height="7" fill="#9aa0a6"/><rect x="329.3" y="223" width="1" height="3" fill="#bdc1c6"/><text x="341.1" y="228.2" font-size="11.5" fill="#3c4043" text-anchor="middle" font-family="Liberation Sans">1</text><rect x="352.9" y="223" width="1" height="3" fill="#bdc1c6"/><rect x="364.7" y="221" width="1" height="7" fill="#9aa0a6"/><rect x="376.5" y="223" width="1" height="3" fill="#bdc1c6"/><text x="388.3" y="228.2" font-size="11.5" fill="#3c4043" text-anchor="middle" font-family="Liberation Sans">2</text><rect x="400.0" y="223" width="1" height="3" fill="#bdc1c6"/><rect x="411.8" y="221" width="1" height="7" fill="#9aa0a6"/><rect x="423.6" y="223" width="1" height="3" fill="#bdc1c6"/><text x="435.4" y="228.2" font-size="11.5" fill="#3c4043" text-anchor="middle" font-family="Liberation Sans">3</text><rect x="447.2" y="223" width="1" height="3" fill="#bdc1c6"/><rect x="459.0" y="221" width="1" height="7" fill="#9aa0a6"/><rect x="470.7" y="223" width="1" height="3" fill="#bdc1c6"/><text x="482.5" y="228.2" font-size="11.5" fill="#3c4043" text-anchor="middle" font-family="Liberation Sans">4</text><rect x="494.3" y="223" width="1" height="3" fill="#bdc1c6"/><rect x="506.1" y="221" width="1" height="7" fill="#9aa0a6"/><rect x="517.9" y="223" width="1" height="3" fill="#bdc1c6"/><text x="529.6" y="228.2" font-size="11.5" fill="#3c4043" text-anchor="middle" font-family="Liberation Sans">5</text><rect x="541.4" y="223" width="1" height="3" fill="#bdc1c6"/><rect x="553.2" y="221" width="1" height="7" fill="#9aa0a6"/><rect x="565.0" y="223" width="1" height="3" fill="#bdc1c6"/><text x="576.8" y="228.2" font-size="11.5" fill="#3c4043" text-anchor="middle" font-family="Liberation Sans">6</text><rect x="588.6" y="223" width="1" height="3" fill="#bdc1c6"/><rect x="600.3" y="221" width="1" height="7" fill="#9aa0a6"/><rect x="612.1" y="223" width="1" height="3" fill="#bdc1c6"/><text x="623.9" y="228.2" font-size="11.5" fill="#3c4043" text-anchor="middle" font-family="Liberation Sans">7</text><rect x="635.7" y="223" width="1" height="3" fill="#bdc1c6"/><rect x="647.5" y="221" width="1" height="7" fill="#9aa0a6"/><rect x="659.3" y="223" width="1" height="3" fill="#bdc1c6"/><text x="671.0" y="228.2" font-size="11.5" fill="#3c4043" text-anchor="middle" font-family="Liberation Sans">8</text><rect x="682.8" y="223" width="1" height="3" fill="#bdc1c6"/><rect x="694.6" y="221" width="1" height="7" fill="#9aa0a6"/><rect x="706.4" y="223" width="1" height="3" fill="#bdc1c6"/><text x="718.2" y="228.2" font-size="11.5" fill="#3c4043" text-anchor="middle" font-family="Liberation Sans">9</text><rect x="730.0" y="223" width="1" height="3" fill="#bdc1c6"/><rect x="741.7" y="221" width="1" height="7" fill="#9aa0a6"/><rect x="753.5" y="223" width="1" height="3" fill="#bdc1c6"/><text x="765.3" y="228.2" font-size="11.5" fill="#3c4043" text-anchor="middle" font-family="Liberation Sans">10</text><rect x="777.1" y="223" width="1" height="3" fill="#bdc1c6"/><rect x="788.9" y="221" width="1" height="7" fill="#9aa0a6"/><rect x="800.6" y="223" width="1" height="3" fill="#bdc1c6"/><text x="812.4" y="228.2" font-size="11.5" fill="#3c4043" text-anchor="middle" font-family="Liberation Sans">11</text><rect x="824.2" y="223" width="1" height="3" fill="#bdc1c6"/><rect x="836.0" y="221" width="1" height="7" fill="#9aa0a6"/><rect x="847.8" y="223" width="1" height="3" fill="#bdc1c6"/><text x="859.6" y="228.2" font-size="11.5" fill="#3c4043" text-anchor="middle" font-family="Liberation Sans">12</text><rect x="871.3" y="223" width="1" height="3" fill="#bdc1c6"/><rect x="883.1" y="221" width="1" height="7" fill="#9aa0a6"/><rect x="894.9" y="223" width="1" height="3" fill="#bdc1c6"/><text x="906.7" y="228.2" font-size="11.5" fill="#3c4043" text-anchor="middle" font-family="Liberation Sans">13</text><rect x="918.5" y="223" width="1" height="3" fill="#bdc1c6"/><rect x="930.3" y="221" width="1" height="7" fill="#9aa0a6"/><rect x="942.0" y="223" width="1" height="3" fill="#bdc1c6"/><text x="953.8" y="228.2" font-size="11.5" fill="#3c4043" text-anchor="middle" font-family="Liberation Sans">14</text><rect x="965.6" y="223" width="1" height="3" fill="#bdc1c6"/><rect x="977.4" y="221" width="1" height="7" fill="#9aa0a6"/><rect x="989.2" y="223" width="1" height="3" fill="#bdc1c6"/><text x="1001.0" y="228.2" font-size="11.5" fill="#3c4043" text-anchor="middle" font-family="Liberation Sans">15</text><rect x="1012.7" y="223" width="1" height="3" fill="#bdc1c6"/><rect x="1024.5" y="221" width="1" height="7" fill="#9aa0a6"/><rect x="1036.3" y="223" width="1" height="3" fill="#bdc1c6"/><text x="1048.1" y="228.2" font-size="11.5" fill="#3c4043" text-anchor="middle" font-family="Liberation Sans">16</text><rect x="1059.9" y="223" width="1" height="3" fill="#bdc1c6"/><rect x="1071.6" y="221" width="1" height="7" fill="#9aa0a6"/><rect x="1083.4" y="223" width="1" height="3" fill="#bdc1c6"/><text x="1095.2" y="228.2" font-size="11.5" fill="#3c4043" text-anchor="middle" font-family="Liberation Sans">17</text><rect x="1107.0" y="223" width="1" height="3" fill="#bdc1c6"/><rect x="1118.8" y="221" width="1" height="7" fill="#9aa0a6"/><rect x="1130.6" y="223" width="1" height="3" fill="#bdc1c6"/><text x="1142.3" y="228.2" font-size="11.5" fill="#3c4043" text-anchor="middle" font-family="Liberation Sans">18</text><rect x="1154.1" y="223" width="1" height="3" fill="#bdc1c6"/><rect x="1165.9" y="221" width="1" height="7" fill="#9aa0a6"/><rect x="1177.7" y="223" width="1" height="3" fill="#bdc1c6"/><text x="1189.5" y="228.2" font-size="11.5" fill="#3c4043" text-anchor="middle" font-family="Liberation Sans">19</text><rect x="1201.3" y="223" width="1" height="3" fill="#bdc1c6"/><rect x="1213.0" y="221" width="1" height="7" fill="#9aa0a6"/><rect x="1224.8" y="223" width="1" height="3" fill="#bdc1c6"/><text x="1236.6" y="228.2" font-size="11.5" fill="#3c4043" text-anchor="middle" font-family="Liberation Sans">20</text><rect x="1248.4" y="223" width="1" height="3" fill="#bdc1c6"/><rect x="1260.2" y="221" width="1" height="7" fill="#9aa0a6"/><rect x="1271.9" y="223" width="1" height="3" fill="#bdc1c6"/><text x="1283.7" y="228.2" font-size="11.5" fill="#3c4043" text-anchor="middle" font-family="Liberation Sans">21</text><rect x="1295.5" y="223" width="1" height="3" fill="#bdc1c6"/><rect x="1307.3" y="221" width="1" height="7" fill="#9aa0a6"/><rect x="1319.1" y="223" width="1" height="3" fill="#bdc1c6"/><text x="1330.9" y="228.2" font-size="11.5" fill="#3c4043" text-anchor="middle" font-family="Liberation Sans">22</text><rect x="1342.6" y="223" width="1" height="3" fill="#bdc1c6"/><rect x="1354.4" y="221" width="1" height="7" fill="#9aa0a6"/><rect x="1366.2" y="223" width="1" height="3" fill="#bdc1c6"/><text x="1378.0" y="228.2" font-size="11.5" fill="#3c4043" text-anchor="middle" font-family="Liberation Sans">23</text><rect x="1389.8" y="223" width="1" height="3" fill="#bdc1c6"/><rect x="1401.6" y="221" width="1" height="7" fill="#9aa0a6"/><rect x="1413.3" y="223" width="1" height="3" fill="#bdc1c6"/><text x="1425.1" y="228.2" font-size="11.5" fill="#3c4043" text-anchor="middle" font-family="Liberation Sans">24</text><rect x="1436.9" y="223" width="1" height="3" fill="#bdc1c6"/><rect x="1448.7" y="221" width="1" height="7" fill="#9aa0a6"/><rect x="1460.5" y="223" width="1" height="3" fill="#bdc1c6"/><text x="1472.2" y="228.2" font-size="11.5" fill="#3c4043" text-anchor="middle" font-family="Liberation Sans">25</text><rect x="1484.0" y="223" width="1" height="3" fill="#bdc1c6"/></svg>
<svg style="left:0;top:0" width="1920" height="1080"><rect x="247" y="262.8" width="3" height="1" fill="#bdc1c6"/><rect x="245" y="274.6" width="7" height="1" fill="#9aa0a6"/><rect x="247" y="286.3" width="3" height="1" fill="#bdc1c6"/><text x="0" y="0" transform="translate(254,298.1) rotate(-90)" font-size="11.5" fill="#3c4043" text-anchor="middle" font-family="Liberation Sans">1</text><rect x="247" y="309.9" width="3" height="1" fill="#bdc1c6"/><rect x="245" y="321.7" width="7" height="1" fill="#9aa0a6"/><rect x="247" y="333.5" width="3" height="1" fill="#bdc1c6"/><text x="0" y="0" transform="translate(254,345.3) rotate(-90)" font-size="11.5" fill="#3c4043" text-anchor="middle" font-family="Liberation Sans">2</text><rect x="247" y="357.0" width="3" height="1" fill="#bdc1c6"/><rect x="245" y="368.8" width="7" height="1" fill="#9aa0a6"/><rect x="247" y="380.6" width="3" height="1" fill="#bdc1c6"/><text x="0" y="0" transform="translate(254,392.4) rotate(-90)" font-size="11.5" fill="#3c4043" text-anchor="middle" font-family="Liberation Sans">3</text><rect x="247" y="404.2" width="3" height="1" fill="#bdc1c6"/><rect x="245" y="416.0" width="7" height="1" fill="#9aa0a6"/><rect x="247" y="427.7" width="3" height="1" fill="#bdc1c6"/><text x="0" y="0" transform="translate(254,439.5) rotate(-90)" font-size="11.5" fill="#3c4043" text-anchor="middle" font-family="Liberation Sans">4</text><rect x="247" y="451.3" width="3" height="1" fill="#bdc1c6"/><rect x="245" y="463.1" width="7" height="1" fill="#9aa0a6"/><rect x="247" y="474.9" width="3" height="1" fill="#bdc1c6"/><text x="0" y="0" transform="translate(254,486.6) rotate(-90)" font-size="11.5" fill="#3c4043" text-anchor="middle" font-family="Liberation Sans">5</text><rect x="247" y="498.4" width="3" height="1" fill="#bdc1c6"/><rect x="245" y="510.2" width="7" height="1" fill="#9aa0a6"/><rect x="247" y="522.0" width="3" height="1" fill="#bdc1c6"/><text x="0" y="0" transform="translate(254,533.8) rotate(-90)" font-size="11.5" fill="#3c4043" text-anchor="middle" font-family="Liberation Sans">6</text><rect x="247" y="545.6" width="3" height="1" fill="#bdc1c6"/><rect x="245" y="557.3" width="7" height="1" fill="#9aa0a6"/><rect x="247" y="569.1" width="3" height="1" fill="#bdc1c6"/><text x="0" y="0" transform="translate(254,580.9) rotate(-90)" font-size="11.5" fill="#3c4043" text-anchor="middle" font-family="Liberation Sans">7</text><rect x="247" y="592.7" width="3" height="1" fill="#bdc1c6"/><rect x="245" y="604.5" width="7" height="1" fill="#9aa0a6"/><rect x="247" y="616.3" width="3" height="1" fill="#bdc1c6"/><text x="0" y="0" transform="translate(254,628.0) rotate(-90)" font-size="11.5" fill="#3c4043" text-anchor="middle" font-family="Liberation Sans">8</text><rect x="247" y="639.8" width="3" height="1" fill="#bdc1c6"/><rect x="245" y="651.6" width="7" height="1" fill="#9aa0a6"/><rect x="247" y="663.4" width="3" height="1" fill="#bdc1c6"/><text x="0" y="0" transform="translate(254,675.2) rotate(-90)" font-size="11.5" fill="#3c4043" text-anchor="middle" font-family="Liberation Sans">9</text><rect x="247" y="687.0" width="3" height="1" fill="#bdc1c6"/><rect x="245" y="698.7" width="7" height="1" fill="#9aa0a6"/><rect x="247" y="710.5" width="3" height="1" fill="#bdc1c6"/><text x="0" y="0" transform="translate(254,722.3) rotate(-90)" font-size="11.5" fill="#3c4043" text-anchor="middle" font-family="Liberation Sans">10</text><rect x="247" y="734.1" width="3" height="1" fill="#bdc1c6"/><rect x="245" y="745.9" width="7" height="1" fill="#9aa0a6"/><rect x="247" y="757.6" width="3" height="1" fill="#bdc1c6"/><text x="0" y="0" transform="translate(254,769.4) rotate(-90)" font-size="11.5" fill="#3c4043" text-anchor="middle" font-family="Liberation Sans">11</text><rect x="247" y="781.2" width="3" height="1" fill="#bdc1c6"/><rect x="245" y="793.0" width="7" height="1" fill="#9aa0a6"/><rect x="247" y="804.8" width="3" height="1" fill="#bdc1c6"/><text x="0" y="0" transform="translate(254,816.6) rotate(-90)" font-size="11.5" fill="#3c4043" text-anchor="middle" font-family="Liberation Sans">12</text><rect x="247" y="828.3" width="3" height="1" fill="#bdc1c6"/><rect x="245" y="840.1" width="7" height="1" fill="#9aa0a6"/><rect x="247" y="851.9" width="3" height="1" fill="#bdc1c6"/><text x="0" y="0" transform="translate(254,863.7) rotate(-90)" font-size="11.5" fill="#3c4043" text-anchor="middle" font-family="Liberation Sans">13</text><rect x="247" y="875.5" width="3" height="1" fill="#bdc1c6"/><rect x="245" y="887.3" width="7" height="1" fill="#9aa0a6"/><rect x="247" y="899.0" width="3" height="1" fill="#bdc1c6"/><text x="0" y="0" transform="translate(254,910.8) rotate(-90)" font-size="11.5" fill="#3c4043" text-anchor="middle" font-family="Liberation Sans">14</text><rect x="247" y="922.6" width="3" height="1" fill="#bdc1c6"/></svg>
<div class="a" style="left:294px;top:250px;width:1198px;height:675px;background:#fff;box-shadow:0 0 0 1px #e0e0e0, 0 1px 2px rgba(60,64,67,.15)"></div>
<div class="a" style="left:242px;top:941px;width:1286px;height:1px;background:#dadce0"></div>
<div class="a" style="left:242px;top:951px;width:1286px;height:1px;background:#dadce0"></div>
<div class="a" style="left:874.5px;top:944.5px;width:3px;height:3px;background:#bdc1c6;border-radius:50%"></div>
<div class="a" style="left:883.5px;top:944.5px;width:3px;height:3px;background:#bdc1c6;border-radius:50%"></div>
<div class="a" style="left:892.5px;top:944.5px;width:3px;height:3px;background:#bdc1c6;border-radius:50%"></div>
<div class="t" style='left:259.20px;top:963.52px;font-size:16px;color:#202124;letter-spacing:0.094px;'>Klicken, um Vortragsnotizen hinzuzufügen</div>
<div class="a" style="left:1388px;top:991px;width:122px;height:40px;border:1px solid #dadce0;border-radius:4px;background:#fafafa"></div>
<svg style="left:1402px;top:1000px" width="21" height="24" viewBox="0 0 21 24"><path d="M2 0 H19 Q21 0 21 2 V18.5 Q21 19.5 20 19.5 H13.5 L10.5 23 L7.5 19.5 H1 Q0 19.5 0 18.5 V2 Q0 0 2 0Z" fill="#f2b01e"/><path d="M10.5 4 L12.3 9.5 L17.5 11 L12.3 12.5 L10.5 18 L8.7 12.5 L3.5 11 L8.7 9.5Z" fill="#fff"/></svg>
<div class="t" style='left:1433.33px;top:1003.78px;font-size:13.5px;color:#5f6368;letter-spacing:0.222px;'>Erkunden</div>
<svg style="left:0;top:0" width="1920" height="1080"><rect x="573.7" y="366" width="1" height="336" fill="#cccccc"/><rect x="711.9" y="366" width="1" height="336" fill="#cccccc"/><rect x="850.1" y="366" width="1" height="336" fill="#cccccc"/><rect x="988.3" y="366" width="1" height="336" fill="#cccccc"/><rect x="1126.5" y="366" width="1" height="336" fill="#cccccc"/><rect x="435.5" y="366" width="1.3" height="336" fill="#333"/><path d="M436.8 393.5 H572.2 Q574.2 393.5 574.2 395.5 V414.0 Q574.2 416.0 572.2 416.0 H436.8Z" fill="#6592ae"/><path d="M436.8 419.0 H681.1 Q683.1 419.0 683.1 421.0 V439.0 Q683.1 441.0 681.1 441.0 H436.8Z" fill="#0d4866"/><path d="M436.8 471 H533.5 Q535.5 471 535.5 473 V491.5 Q535.5 493.5 533.5 493.5 H436.8Z" fill="#6592ae"/><path d="M436.8 496.5 H1097.9 Q1099.9 496.5 1099.9 498.5 V516.5 Q1099.9 518.5 1097.9 518.5 H436.8Z" fill="#0d4866"/><path d="M436.8 549 H467.2 Q469.2 549 469.2 551 V569.5 Q469.2 571.5 467.2 571.5 H436.8Z" fill="#6592ae"/><path d="M436.8 574.5 H536.3 Q538.3 574.5 538.3 576.5 V594.5 Q538.3 596.5 536.3 596.5 H436.8Z" fill="#0d4866"/><path d="M436.8 626 H627.5 Q629.5 626 629.5 628 V646.5 Q629.5 648.5 627.5 648.5 H436.8Z" fill="#6592ae"/><path d="M436.8 651.5 H608.1 Q610.1 651.5 610.1 653.5 V671.5 Q610.1 673.5 608.1 673.5 H436.8Z" fill="#0d4866"/><text x="426.5" y="423.7" font-size="16" fill="#222" text-anchor="end" font-family="Liberation Sans">Name 1</text><text x="426.5" y="501.2" font-size="16" fill="#222" text-anchor="end" font-family="Liberation Sans">Name 2</text><text x="426.5" y="579.2" font-size="16" fill="#222" text-anchor="end" font-family="Liberation Sans">Name 3</text><text x="426.5" y="656.2" font-size="16" fill="#222" text-anchor="end" font-family="Liberation Sans">Name 4</text><text x="436.0" y="725" font-size="16" fill="#222" text-anchor="middle" font-family="Liberation Sans">0</text><text x="574.2" y="725" font-size="16" fill="#222" text-anchor="middle" font-family="Liberation Sans">50</text><text x="712.4" y="725" font-size="16" fill="#222" text-anchor="middle" font-family="Liberation Sans">100</text><text x="850.6" y="725" font-size="16" fill="#222" text-anchor="middle" font-family="Liberation Sans">150</text><text x="988.8" y="725" font-size="16" fill="#222" text-anchor="middle" font-family="Liberation Sans">200</text><text x="1127.0" y="725" font-size="16" fill="#222" text-anchor="middle" font-family="Liberation Sans">250</text><rect x="642" y="331.5" width="15.5" height="15.5" rx="1" fill="#6592ae"/><text x="669" y="345" font-size="16" fill="#222" font-family="Liberation Sans">Jahr 2020</text><rect x="761" y="331.5" width="15.5" height="15.5" rx="1" fill="#0d4866"/><text x="788" y="345" font-size="16" fill="#222" font-family="Liberation Sans">Jahr 2021</text><rect x="341.5" y="307.5" width="817" height="452" fill="none" stroke="#c5d3f0" stroke-width="1"/><rect x="345" y="311" width="810" height="445" fill="none" stroke="#000814" stroke-width="5.5"/><rect x="1076.5" y="324.5" width="66" height="30" rx="3" fill="#fff" stroke="#e3e3e3" stroke-width="1"/><g transform="translate(1084,328) scale(0.95)"><path d="M3.9 12c0-1.71 1.39-3.1 3.1-3.1h4V7H7c-2.76 0-5 2.24-5 5s2.24 5 5 5h4v-1.9H7c-1.71 0-3.1-1.39-3.1-3.1zM8 13h8v-2H8v2zm9-6h-4v1.9h4c1.71 0 3.1 1.39 3.1 3.1s-1.39 3.1-3.1 3.1h-4V17h4c2.76 0 5-2.24 5-5s-2.24-5-5-5z" fill="#5f6368"/></g><path d="M1121.5 334.5 L1128 341 L1134.5 334.5" fill="none" stroke="#5f6368" stroke-width="2"/><path d="M751 291 V309" stroke="#3060c0" stroke-width="1"/><circle cx="751" cy="287.5" r="4" fill="#3b78e7"/><rect x="343.5" y="309.0" width="9" height="9" fill="#3b78e7" stroke="#fff" stroke-width="0.8"/><rect x="343.5" y="749.5" width="9" height="9" fill="#3b78e7" stroke="#fff" stroke-width="0.8"/><rect x="746.5" y="309.0" width="9" height="9" fill="#3b78e7" stroke="#fff" stroke-width="0.8"/><rect x="746.5" y="749.5" width="9" height="9" fill="#3b78e7" stroke="#fff" stroke-width="0.8"/><rect x="1149.5" y="309.0" width="9" height="9" fill="#3b78e7" stroke="#fff" stroke-width="0.8"/><rect x="1149.5" y="749.5" width="9" height="9" fill="#3b78e7" stroke="#fff" stroke-width="0.8"/><rect x="343.5" y="529.5" width="9" height="9" fill="#3b78e7" stroke="#fff" stroke-width="0.8"/><rect x="1149.5" y="529.5" width="9" height="9" fill="#3b78e7" stroke="#fff" stroke-width="0.8"/><defs><linearGradient id="rf" x1="0" y1="0" x2="0" y2="1"><stop offset="0" stop-color="#000" stop-opacity="1"/><stop offset="1" stop-color="#000" stop-opacity="0"/></linearGradient><linearGradient id="rf2" x1="0" y1="0" x2="0" y2="1"><stop offset="0" stop-color="#222" stop-opacity="0.9"/><stop offset="1" stop-color="#444" stop-opacity="0"/></linearGradient></defs><rect x="343" y="764.5" width="815" height="5" fill="#050505"/><rect x="343" y="766" width="5" height="52" fill="url(#rf2)"/><rect x="1152.5" y="766" width="5" height="52" fill="url(#rf2)"/><text x="0" y="0" transform="translate(436.0,797.5) scale(1,-1)" font-size="16" fill="#cfcfcf" text-anchor="middle" font-family="Liberation Sans">0</text><text x="0" y="0" transform="translate(574.2,797.5) scale(1,-1)" font-size="16" fill="#cfcfcf" text-anchor="middle" font-family="Liberation Sans">50</text><text x="0" y="0" transform="translate(712.4,797.5) scale(1,-1)" font-size="16" fill="#cfcfcf" text-anchor="middle" font-family="Liberation Sans">100</text><text x="0" y="0" transform="translate(850.6,797.5) scale(1,-1)" font-size="16" fill="#cfcfcf" text-anchor="middle" font-family="Liberation Sans">150</text><text x="0" y="0" transform="translate(988.8,797.5) scale(1,-1)" font-size="16" fill="#cfcfcf" text-anchor="middle" font-family="Liberation Sans">200</text><text x="0" y="0" transform="translate(1127.0,797.5) scale(1,-1)" font-size="16" fill="#cfcfcf" text-anchor="middle" font-family="Liberation Sans">250</text></svg>
<div class="a" style="left:241px;top:216px;width:1px;height:824px;background:#dadce0"></div>
<div class="t" style='left:26.05px;top:217.69px;font-size:12.5px;color:#5f6368;'>4</div>
<svg style="left:15px;top:241px" width="20" height="20" viewBox="0 0 20 20"><circle cx="7" cy="13" r="5.3" fill="#fff" stroke="#5f6368" stroke-width="1.5"/><circle cx="9.5" cy="10.5" r="5.3" fill="#fff" stroke="#5f6368" stroke-width="1.5"/><circle cx="12" cy="8" r="5.3" fill="#fff" stroke="#5f6368" stroke-width="1.5"/></svg>
<div class="t" style='left:26.05px;top:329.69px;font-size:12.5px;color:#5f6368;'>5</div>
<svg style="left:15px;top:353px" width="20" height="20" viewBox="0 0 20 20"><circle cx="7" cy="13" r="5.3" fill="#fff" stroke="#5f6368" stroke-width="1.5"/><circle cx="9.5" cy="10.5" r="5.3" fill="#fff" stroke="#5f6368" stroke-width="1.5"/><circle cx="12" cy="8" r="5.3" fill="#fff" stroke="#5f6368" stroke-width="1.5"/></svg>
<div class="t" style='left:26.05px;top:441.69px;font-size:12.5px;color:#5f6368;'>6</div>
<svg style="left:15px;top:465px" width="20" height="20" viewBox="0 0 20 20"><circle cx="7" cy="13" r="5.3" fill="#fff" stroke="#5f6368" stroke-width="1.5"/><circle cx="9.5" cy="10.5" r="5.3" fill="#fff" stroke="#5f6368" stroke-width="1.5"/><circle cx="12" cy="8" r="5.3" fill="#fff" stroke="#5f6368" stroke-width="1.5"/></svg>
<div class="t" style='left:26.05px;top:553.69px;font-size:12.5px;color:#5f6368;'>7</div>
<svg style="left:15px;top:577px" width="20" height="20" viewBox="0 0 20 20"><circle cx="7" cy="13" r="5.3" fill="#fff" stroke="#5f6368" stroke-width="1.5"/><circle cx="9.5" cy="10.5" r="5.3" fill="#fff" stroke="#5f6368" stroke-width="1.5"/><circle cx="12" cy="8" r="5.3" fill="#fff" stroke="#5f6368" stroke-width="1.5"/></svg>
<div class="t" style='left:26.05px;top:665.69px;font-size:12.5px;color:#5f6368;'>8</div>
<svg style="left:15px;top:723px" width="20" height="20" viewBox="0 0 20 20"><circle cx="7" cy="13" r="5.3" fill="#fff" stroke="#5f6368" stroke-width="1.5"/><circle cx="9.5" cy="10.5" r="5.3" fill="#fff" stroke="#5f6368" stroke-width="1.5"/><circle cx="12" cy="8" r="5.3" fill="#fff" stroke="#5f6368" stroke-width="1.5"/></svg>
<svg style="left:16px;top:690px" width="17" height="17" viewBox="0 0 17 17"><path d="M0 1 Q0 0 1 0 H16 Q17 0 17 1 V13 L17 17 L13 13 H1 Q0 13 0 12Z" fill="#5f6368"/><text x="8.5" y="10.5" font-size="10" font-weight="700" fill="#fff" text-anchor="middle" font-family="Liberation Sans">1</text></svg>
<div class="t" style='left:26.05px;top:777.69px;font-size:12.5px;color:#5f6368;'>9</div>
<svg style="left:15px;top:801px" width="20" height="20" viewBox="0 0 20 20"><circle cx="7" cy="13" r="5.3" fill="#fff" stroke="#5f6368" stroke-width="1.5"/><circle cx="9.5" cy="10.5" r="5.3" fill="#fff" stroke="#5f6368" stroke-width="1.5"/><circle cx="12" cy="8" r="5.3" fill="#fff" stroke="#5f6368" stroke-width="1.5"/></svg>
<div class="a" style="left:46px;top:217px;width:170px;height:98px;border:1px solid #dadce0;border-radius:6px;background:#fff"></div>
<div class="a" style="left:50px;top:221px;width:162px;height:90px;background:#fff"></div>
<div class="a" style="left:50px;top:221px;width:162px;height:3px;background:#263238"></div>
<div class="a" style="left:50px;top:221px;width:3px;height:49px;background:#263238"></div>
<div class="a" style="left:50px;top:270px;width:3px;height:41px;background:#b49e76"></div>
<div class="a" style="left:50px;top:308px;width:126px;height:3px;background:#b49e76"></div>
<div class="a" style="left:176px;top:308px;width:36px;height:3px;background:#cfd0d2"></div>
<div class="a" style="left:209px;top:221px;width:3px;height:28px;background:#263238"></div>
<div class="a" style="left:209px;top:249px;width:3px;height:62px;background:#cfd0d2"></div>
<div class="t" style='left:63.67px;top:240.12px;font-size:6.5px;color:#b5826c;'>Formen einfügen</div>
<div class="t" style='left:91.90px;top:261.09px;font-size:22px;color:#000;font-weight:700;'>7</div>
<svg style="left:109px;top:263px" width="14" height="14" viewBox="0 0 14 14"><path d="M2 2 L12 12 M12 2 L2 12" stroke="#d0021b" stroke-width="4"/></svg>
<svg style="left:147px;top:243px" width="38" height="38" viewBox="0 0 38 38"><path d="M38.0 19.0 L35.1 22.7 L36.1 27.2 L31.9 29.3 L30.8 33.9 L26.2 33.9 L23.2 37.5 L19.0 35.5 L14.8 37.5 L11.8 33.9 L7.2 33.9 L6.1 29.3 L1.9 27.2 L2.9 22.7 L0.0 19.0 L2.9 15.3 L1.9 10.8 L6.1 8.7 L7.2 4.1 L11.8 4.1 L14.8 0.5 L19.0 2.5 L23.2 0.5 L26.2 4.1 L30.8 4.1 L31.9 8.7 L36.1 10.8 L35.1 15.3Z" fill="#d3d3d3" stroke="#d3d3d3" stroke-width="2" stroke-linejoin="round"/><rect x="11" y="17" width="16" height="2" fill="#eee"/></svg>
<div class="a" style="left:46px;top:329px;width:170px;height:98px;border:1px solid #dadce0;border-radius:6px;background:#fff"></div>
<div class="a" style="left:50px;top:333px;width:162px;height:90px;background:#fff"></div>
<div class="a" style="left:50px;top:333px;width:162px;height:3px;background:#263238"></div>
<div class="a" style="left:50px;top:333px;width:3px;height:49px;background:#263238"></div>
<div class="a" style="left:50px;top:382px;width:3px;height:41px;background:#b49e76"></div>
<div class="a" style="left:50px;top:420px;width:126px;height:3px;background:#b49e76"></div>
<div class="a" style="left:176px;top:420px;width:36px;height:3px;background:#cfd0d2"></div>
<div class="a" style="left:209px;top:333px;width:3px;height:28px;background:#263238"></div>
<div class="a" style="left:209px;top:361px;width:3px;height:62px;background:#cfd0d2"></div>
<div class="t" style='left:64.67px;top:350.12px;font-size:6.5px;color:#b5826c;'>Ich bin Texxt.</div>
<div class="a" style="left:65px;top:371px;width:12px;height:1px;background:#bbb"></div>
<div class="a" style="left:134px;top:371px;width:10px;height:1px;background:#bbb"></div>
<div class="a" style="left:134px;top:378px;width:10px;height:1px;background:#bbb"></div>
<div class="a" style="left:46px;top:441px;width:170px;height:98px;border:1px solid #dadce0;border-radius:6px;background:#fff"></div>
<div class="a" style="left:50px;top:445px;width:162px;height:90px;background:#fff"></div>
<div class="a" style="left:50px;top:445px;width:162px;height:3px;background:#263238"></div>
<div class="a" style="left:50px;top:445px;width:3px;height:49px;background:#263238"></div>
<div class="a" style="left:50px;top:494px;width:3px;height:41px;background:#b49e76"></div>
<div class="a" style="left:50px;top:532px;width:126px;height:3px;background:#b49e76"></div>
<div class="a" style="left:176px;top:532px;width:36px;height:3px;background:#cfd0d2"></div>
<div class="a" style="left:209px;top:445px;width:3px;height:28px;background:#263238"></div>
<div class="a" style="left:209px;top:473px;width:3px;height:62px;background:#cfd0d2"></div>
<div class="t" style='left:61.67px;top:456.12px;font-size:6.5px;color:#b5826c;'>Mindmap</div>
<svg style="left:50px;top:445px" width="162" height="90"><g fill="#e8e8e8" stroke="#444" stroke-width="0.8"><rect x="74.5" y="11.5" width="24" height="11"/><rect x="37.5" y="21.5" width="24" height="11"/><rect x="108.5" y="21.5" width="24" height="11"/><rect x="124.5" y="39.5" width="24" height="11"/><rect x="18.5" y="41.5" width="24" height="11"/><rect x="33.5" y="61.5" width="24" height="11"/><rect x="114.5" y="57.5" width="24" height="11"/><rect x="73.5" y="72.5" width="24" height="11"/></g><circle cx="81" cy="46" r="9" fill="#fff" stroke="#444" stroke-width="0.8"/><path d="M61 32 L74 40" stroke="#222" stroke-width="0.9"/><path d="M42 47 H72 M48 61 L75 52 M83 55 L84 72" stroke="#ccc" stroke-width="0.6"/><path d="M37 63 L43 62 L46 70 L39 71Z M46 62 L53 62 L51 71 L47 70Z" fill="#e8902a"/></svg>
<div class="a" style="left:46px;top:553px;width:170px;height:98px;border:1px solid #dadce0;border-radius:6px;background:#fff"></div>
<div class="a" style="left:50px;top:557px;width:162px;height:90px;background:#fff"></div>
<div class="a" style="left:50px;top:557px;width:162px;height:3px;background:#263238"></div>
<div class="a" style="left:50px;top:557px;width:3px;height:49px;background:#263238"></div>
<div class="a" style="left:50px;top:606px;width:3px;height:41px;background:#b49e76"></div>
<div class="a" style="left:50px;top:644px;width:126px;height:3px;background:#b49e76"></div>
<div class="a" style="left:176px;top:644px;width:36px;height:3px;background:#cfd0d2"></div>
<div class="a" style="left:209px;top:557px;width:3px;height:28px;background:#263238"></div>
<div class="a" style="left:209px;top:585px;width:3px;height:62px;background:#cfd0d2"></div>
<div class="t" style='left:64.67px;top:575.12px;font-size:6.5px;color:#b04060;'>Erste Folie - Beispiel</div>
<div class="a" style="left:96px;top:597px;width:44px;height:1px;background:#aaa"></div>
<div class="a" style="left:96px;top:604px;width:12px;height:1px;background:#aaa"></div>
<div class="a" style="left:96px;top:611px;width:20px;height:1px;background:#aaa"></div>
<div class="a" style="left:96px;top:628px;width:20px;height:1px;background:#aaa"></div>
<div class="a" style="left:46px;top:665px;width:170px;height:98px;border:1px solid #dadce0;border-radius:6px;background:#fff"></div>
<div class="a" style="left:50px;top:669px;width:162px;height:90px;background:#fff"></div>
<div class="a" style="left:50px;top:669px;width:162px;height:3px;background:#263238"></div>
<div class="a" style="left:50px;top:669px;width:3px;height:49px;background:#263238"></div>
<div class="a" style="left:50px;top:718px;width:3px;height:41px;background:#b49e76"></div>
<div class="a" style="left:50px;top:756px;width:126px;height:3px;background:#b49e76"></div>
<div class="a" style="left:176px;top:756px;width:36px;height:3px;background:#cfd0d2"></div>
<div class="a" style="left:209px;top:669px;width:3px;height:28px;background:#263238"></div>
<div class="a" style="left:209px;top:697px;width:3px;height:62px;background:#cfd0d2"></div>
<div class="a" style="left:46px;top:777px;width:170px;height:98px;border:1px solid #dadce0;border-radius:6px;background:#fff"></div>
<svg style="left:73px;top:800px" width="118" height="56"><g stroke="#ddd" stroke-width="0.7" fill="none"><rect x="0.5" y="0.5" width="117" height="55"/><path d="M0 15 H118 M0 28 H118 M0 42 H118 M29.5 0 V56 M58.5 0 V56 M88.5 0 V56"/></g><path d="M0 15 H118" stroke="#aaa" stroke-width="0.8"/></svg>
<div class="a" style="left:0px;top:885px;width:221px;height:110px;background:#feefc3"></div>
<div class="t" style='left:19.09px;top:891.69px;font-size:12.5px;color:#3c4043;'>10</div>
<svg style="left:15px;top:914px" width="20" height="20" viewBox="0 0 20 20"><circle cx="7" cy="13" r="5.3" fill="#feefc3" stroke="#6d5d2d" stroke-width="1.5"/><circle cx="9.5" cy="10.5" r="5.3" fill="#feefc3" stroke="#6d5d2d" stroke-width="1.5"/><circle cx="12" cy="8" r="5.3" fill="#feefc3" stroke="#6d5d2d" stroke-width="1.5"/></svg>
<div class="a" style="left:46px;top:890px;width:170px;height:99px;border:2px solid #857d70;border-radius:7px;background:#fff"></div>
<svg style="left:56px;top:900px" width="113" height="72"><rect x="0.8" y="0.8" width="111" height="63" fill="#fff" stroke="#555" stroke-width="1.4"/>
    <circle cx="42" cy="5" r="1.2" fill="#888"/><rect x="45" y="4.5" width="9" height="1" fill="#ccc"/><circle cx="59" cy="5" r="1.2" fill="#444"/><rect x="62" y="4.5" width="9" height="1" fill="#ccc"/>
    <path d="M12.8 9 V58" stroke="#ccc" stroke-width="0.5"/>
    <g fill="#6593ad"><rect x="13" y="12.9" width="19" height="3.5"/><rect x="13" y="24.2" width="14" height="3.3"/><rect x="13" y="34.8" width="4" height="2.7"/><rect x="13" y="45.2" width="26" height="3.3"/></g>
    <g fill="#1b4560"><rect x="13" y="16.4" width="33" height="3.1"/><rect x="13" y="27.5" width="91" height="3.3"/><rect x="13" y="37.5" width="14" height="3.4"/><rect x="13" y="48.5" width="24" height="3.1"/></g>
    <g fill="#bbb"><rect x="4" y="15" width="6" height="1"/><rect x="4" y="26" width="6" height="1"/><rect x="4" y="36.5" width="6" height="1"/><rect x="4" y="47.5" width="6" height="1"/></g>
    <g fill="#bbb"><rect x="12" y="60" width="1.5" height="2"/><rect x="30" y="60" width="3" height="2"/><rect x="49" y="60" width="3" height="2"/><rect x="68" y="60" width="3" height="2"/><rect x="87" y="60" width="3" height="2"/><rect x="106" y="60" width="3" height="2"/></g>
    <path d="M1 65.5 H112" stroke="#888" stroke-width="1.4"/><path d="M1 66 V70 M112 66 V70" stroke="#ddd" stroke-width="1"/></svg>
<div class="a" style="left:228px;top:460px;width:9px;height:532px;background:#dadce0;border-radius:5px"></div>
<div class="a" style="left:0px;top:998px;width:241px;height:1px;background:#e8eaed"></div>
<div class="a" style="left:34px;top:996px;width:53px;height:3px;background:#202124"></div>
<svg style="left:50px;top:1011px" width="16" height="13" viewBox="0 0 16 13"><rect x="0" y="0" width="5" height="13" fill="#202124"/><rect x="6" y="0" width="10" height="8" fill="#202124"/><rect x="6" y="9" width="10" height="4" fill="#202124"/></svg>
<svg style="left:170px;top:1011px" width="16" height="14" viewBox="0 0 16 14"><g fill="#5f6368"><rect x="0" y="0" width="4.5" height="4"/><rect x="5.7" y="0" width="4.5" height="4"/><rect x="11.5" y="0" width="4.5" height="4"/><rect x="0" y="5" width="4.5" height="4"/><rect x="5.7" y="5" width="4.5" height="4"/><rect x="11.5" y="5" width="4.5" height="4"/><rect x="0" y="10" width="4.5" height="4"/><rect x="5.7" y="10" width="4.5" height="4"/><rect x="11.5" y="10" width="4.5" height="4"/></g></svg>
<div class="a" style="left:1528px;top:174px;width:330px;height:866px;background:#f8f9fa"></div>
<div class="a" style="left:1528px;top:174px;width:330px;height:62px;background:#fff"></div>
<div class="a" style="left:1528px;top:236px;width:330px;height:1px;background:#dadce0"></div>
<div class="a" style="left:1858px;top:174px;width:1px;height:866px;background:#dadce0"></div>
<div class="a" style="left:1527px;top:174px;width:1px;height:866px;background:#e9eaec"></div>
<svg style="left:1549px;top:194px" width="21" height="22" viewBox="0 0 21 22"><path d="M1.5 1.5 H19.5 V12.5 H1.5Z" fill="none" stroke="#f4b400" stroke-width="2.6"/><rect x="3" y="3" width="15" height="3.5" fill="#fbd36b"/><rect x="1" y="8" width="19" height="5" fill="#f4b400"/><rect x="8" y="13" width="5" height="9" rx="1" fill="#f4b400"/><path d="M5 2 V6 M9 2 V5 M13 2 V6 M17 2 V5" stroke="#fff" stroke-width="0.8"/></svg>
<div class="t" style='left:1585.10px;top:195.71px;font-size:18px;color:#202124;letter-spacing:0.435px;'>Formatierungsoptionen</div>
<svg style="left:1821px;top:199px" width="14" height="14" viewBox="0 0 14 14"><path d="M1 1 L13 13 M13 1 L1 13" stroke="#5f6368" stroke-width="1.9"/></svg>
<div class="a" style="left:1845px;top:241px;width:9px;height:786px;background:#dadce0;border-radius:4.5px"></div>
<svg style="left:1555px;top:261px" width="11" height="18" viewBox="0 0 11 18"><path d="M1.5 1.5 L9 9 L1.5 16.5" fill="none" stroke="#5f6368" stroke-width="2.2"/></svg>
<div class="t" style='left:1588.25px;top:261.43px;font-size:15px;color:#202124;-webkit-text-stroke:0.35px #202124;letter-spacing:0.067px;'>Größe und Drehung</div>
<svg style="left:1555px;top:326px" width="11" height="18" viewBox="0 0 11 18"><path d="M1.5 1.5 L9 9 L1.5 16.5" fill="none" stroke="#5f6368" stroke-width="2.2"/></svg>
<div class="t" style='left:1588.25px;top:326.43px;font-size:15px;color:#202124;-webkit-text-stroke:0.35px #202124;letter-spacing:0.589px;'>Position</div>
<svg style="left:1555px;top:391px" width="11" height="18" viewBox="0 0 11 18"><path d="M1.5 1.5 L9 9 L1.5 16.5" fill="none" stroke="#5f6368" stroke-width="2.2"/></svg>
<div class="t" style='left:1588.25px;top:391.43px;font-size:15px;color:#202124;-webkit-text-stroke:0.35px #202124;letter-spacing:0.272px;'>Neu einfärben</div>
<div class="a" style="left:1528px;top:431px;width:312px;height:309px;background:#fff;border-radius:6px;box-shadow:0 1px 3px rgba(60,64,67,.18)"></div>
<svg style="left:1551px;top:459px" width="18" height="11" viewBox="0 0 18 11"><path d="M1.5 1.5 L9 9 L16.5 1.5" fill="none" stroke="#5f6368" stroke-width="2.2"/></svg>
<div class="t" style='left:1588.25px;top:456.43px;font-size:15px;color:#202124;-webkit-text-stroke:0.35px #202124;letter-spacing:0.312px;'>Korrekturen</div>
<div class="t" style='left:1545.40px;top:508.14px;font-size:12px;color:#5f6368;'>Transparenz</div>
<div class="a" style="left:1546px;top:536px;width:278px;height:1px;background:#dadce0"></div>
<div class="a" style="left:1546px;top:526.5px;width:20px;height:20px;background:#f1f3f4;border:1px solid #dadce0;border-radius:2px"></div>
<div class="t" style='left:1545.40px;top:560.14px;font-size:12px;color:#5f6368;'>Helligkeit</div>
<div class="a" style="left:1546px;top:588px;width:278px;height:1px;background:#dadce0"></div>
<div class="a" style="left:1676px;top:578.5px;width:20px;height:20px;background:#f1f3f4;border:1px solid #dadce0;border-radius:2px"></div>
<div class="t" style='left:1545.40px;top:612.14px;font-size:12px;color:#5f6368;'>Kontrast</div>
<div class="a" style="left:1546px;top:641px;width:278px;height:1px;background:#dadce0"></div>
<div class="a" style="left:1676px;top:631.5px;width:20px;height:20px;background:#f1f3f4;border:1px solid #dadce0;border-radius:2px"></div>
<div class="a" style="left:1546px;top:679px;width:156px;height:39px;border:1px solid #dadce0;border-radius:4px;background:#fff"></div>
<div class="t" style='left:1572.25px;top:690.42px;font-size:15px;color:#202124;-webkit-text-stroke:0.35px #202124;letter-spacing:1.041px;'>Zurücksetzen</div>
<svg style="left:1555px;top:765px" width="11" height="18" viewBox="0 0 11 18"><path d="M1.5 1.5 L9 9 L1.5 16.5" fill="none" stroke="#5f6368" stroke-width="2.2"/></svg>
<div class="t" style='left:1588.25px;top:765.42px;font-size:15px;color:#202124;-webkit-text-stroke:0.35px #202124;letter-spacing:0.379px;'>Schlagschatten</div>
<div class="a" style="left:1804px;top:763px;width:20px;height:20px;border:2px solid #5f6368;border-radius:2px"></div>
<div class="a" style="left:1528px;top:806px;width:312px;height:240px;background:#fff;border-radius:6px 6px 0 0;box-shadow:0 1px 3px rgba(60,64,67,.18)"></div>
<svg style="left:1551px;top:833px" width="18" height="11" viewBox="0 0 18 11"><path d="M1.5 1.5 L9 9 L16.5 1.5" fill="none" stroke="#5f6368" stroke-width="2.2"/></svg>
<div class="t" style='left:1588.25px;top:830.42px;font-size:15px;color:#202124;-webkit-text-stroke:0.35px #202124;letter-spacing:0.369px;'>Reflexion</div>
<div class="a" style="left:1804px;top:828px;width:20px;height:20px;background:#202124;border-radius:2px"></div>
<svg style="left:1806px;top:830px" width="16" height="16" viewBox="0 0 16 16"><path d="M3 8.5 L6.5 12 L13.5 4.5" fill="none" stroke="#fff" stroke-width="2.2"/></svg>
<div class="t" style='left:1545.40px;top:882.14px;font-size:12px;color:#5f6368;'>Transparenz</div>
<div class="a" style="left:1546px;top:910px;width:278px;height:1px;background:#dadce0"></div>
<div class="a" style="left:1546px;top:900.5px;width:20px;height:20px;background:#f1f3f4;border:1px solid #dadce0;border-radius:2px"></div>
<div class="t" style='left:1545.40px;top:934.14px;font-size:12px;color:#5f6368;'>Entfernung</div>
<div class="a" style="left:1546px;top:962px;width:278px;height:1px;background:#dadce0"></div>
<div class="a" style="left:1556px;top:952.5px;width:20px;height:20px;background:#f1f3f4;border:1px solid #dadce0;border-radius:2px"></div>
<div class="t" style='left:1545.40px;top:987.14px;font-size:12px;color:#5f6368;'>Größe</div>
<div class="a" style="left:1546px;top:1015px;width:278px;height:1px;background:#dadce0"></div>
<div class="a" style="left:1575px;top:1005.5px;width:20px;height:20px;background:#f1f3f4;border:1px solid #dadce0;border-radius:2px"></div>
<svg style="left:1677px;top:561px" width="14" height="21" viewBox="0 0 14 21"><path d="M1 1 V16 L4.5 12.5 L7.5 19 L10 18 L7.2 11.5 L12 11.5Z" fill="#fff" stroke="#000" stroke-width="1"/></svg>
<svg style="left:1880px;top:195px" width="21" height="21" viewBox="0 0 21 21"><rect x="0" y="0" width="21" height="21" rx="2" fill="#4285f4"/><rect x="4" y="4" width="13" height="13" fill="#fff"/><rect x="17" y="4" width="4" height="13" fill="#fbbc04"/><rect x="4" y="17" width="13" height="4" fill="#34a853"/><path d="M17 17 H21 L17 21Z" fill="#188038"/><text x="10.5" y="14.5" font-size="8.5" font-weight="700" fill="#4285f4" text-anchor="middle" font-family="Liberation Sans">31</text></svg>
<svg style="left:1880px;top:256px" width="21" height="21" viewBox="0 0 21 21"><rect x="0" y="0" width="21" height="21" rx="2.5" fill="#f6b93b"/><circle cx="10.5" cy="9" r="4.2" fill="#fff"/><rect x="8.5" y="12" width="4" height="4" fill="#fff"/></svg>
<svg style="left:1880px;top:318px" width="21" height="21" viewBox="0 0 21 21"><circle cx="10.5" cy="10.5" r="10.5" fill="#4a7fdc"/><path d="M5.5 11 L9 14.5 L15.5 6.5" fill="none" stroke="#fff" stroke-width="2.4"/><circle cx="4.5" cy="12" r="1.3" fill="#fbbc04"/></svg>
<div class="a" style="left:1879px;top:377px;width:23px;height:1px;background:#dadce0"></div>
<svg style="left:1883px;top:419px" width="14" height="14" viewBox="0 0 14 14"><path d="M7 0 V14 M0 7 H14" stroke="#5f6368" stroke-width="1.8"/></svg>
<svg style="left:1885px;top:1003px" width="9" height="13" viewBox="0 0 9 13"><path d="M1.5 1.5 L7 6.5 L1.5 11.5" fill="none" stroke="#5f6368" stroke-width="1.6"/></svg>
<div class="a" style="left:0px;top:1040px;width:1920px;height:40px;background:linear-gradient(90deg,#1f2d37 0%,#203240 50%,#213240 60%,#1e2b40 78%,#1b2444 100%)"></div>
<svg style="left:16px;top:1052px" width="17" height="17" viewBox="0 0 17 17"><g fill="#fff"><path d="M0 2.3 L7 1.3 V7.9 H0Z"/><path d="M8 1.1 L17 0 V7.9 H8Z"/><path d="M0 9 H7 V15.7 L0 14.7Z"/><path d="M8 9 H17 V17 L8 15.9Z"/></g></svg>
<div class="a" style="left:48px;top:1040px;width:344px;height:40px;background:#f2f2f2;border-top:1px solid #d9d9d9"></div>
<svg style="left:60px;top:1052px" width="17" height="17" viewBox="0 0 17 17"><circle cx="10.5" cy="6.5" r="5.2" fill="none" stroke="#202020" stroke-width="1.3"/><path d="M6.8 10.2 L1 16" stroke="#202020" stroke-width="1.5"/></svg>
<div class="t" style='left:87.25px;top:1052.42px;font-size:15px;color:#333333;letter-spacing:-0.118px;'>Zur Suche Text hier eingeben</div>
<svg style="left:407px;top:1052px" width="17" height="16" viewBox="0 0 17 16"><g fill="none" stroke="#fff" stroke-width="1.2"><rect x="2.5" y="3.5" width="9" height="8"/><path d="M0 1 H13 M0 14.5 H13 M14.5 2 V14"/></g><rect x="13.5" y="5" width="3" height="3" fill="#fff"/></svg>
<svg style="left:455px;top:1050px" width="24" height="20" viewBox="0 0 24 20"><path d="M0 2 H8 L10 4 H24 V19 H0Z" fill="#f0c040"/><rect x="0" y="6" width="24" height="13" fill="#ffd866"/><rect x="6" y="12" width="12" height="6" fill="#4a88b5"/><rect x="8" y="15" width="8" height="3" fill="#9cc8e8"/></svg>
<div class="a" style="left:447px;top:1077px;width:40px;height:3px;background:#8eb6d6"></div>
<svg style="left:504px;top:1049px" width="24" height="20" viewBox="0 0 24 20"><path d="M0 6 L12 0 L24 6 V19 H0Z" fill="#0a64c8"/><path d="M0 8 H24 V19 H0Z" fill="#3b9ae6"/><path d="M0 8 L12 15 L24 8" fill="none" stroke="#bfe0ff" stroke-width="1"/></svg>
<div class="a" style="left:511px;top:1057px;width:28px;height:17px;border-radius:9px;background:#1f2e38;border:1px solid #9aa"></div>
<div class="t" style='left:514.82px;top:1060.14px;font-size:12px;color:#fff;font-weight:700;'>99+</div>
<svg style="left:553px;top:1049px" width="24" height="22" viewBox="0 0 24 22"><rect x="6" y="0" width="18" height="22" rx="2" fill="#2b7cd3"/><rect x="6" y="11" width="18" height="11" fill="#185abd"/><rect x="0" y="5" width="12" height="12" rx="1" fill="#185abd"/><text x="6" y="15" font-size="10" font-weight="700" fill="#fff" text-anchor="middle" font-family="Liberation Sans">W</text></svg>
<div class="a" style="left:545px;top:1077px;width:40px;height:3px;background:#8eb6d6"></div>
<svg style="left:602px;top:1049px" width="24" height="22" viewBox="0 0 24 22"><rect x="6" y="0" width="18" height="22" rx="2" fill="#21a366"/><rect x="15" y="0" width="9" height="11" fill="#33c481"/><rect x="6" y="11" width="18" height="11" fill="#107c41"/><rect x="0" y="5" width="12" height="12" rx="1" fill="#107c41"/><text x="6" y="15" font-size="10" font-weight="700" fill="#fff" text-anchor="middle" font-family="Liberation Sans">X</text></svg>
<svg style="left:651px;top:1049px" width="24" height="22" viewBox="0 0 24 22"><circle cx="13" cy="11" r="11" fill="#ed6c47"/><path d="M13 0 A11 11 0 0 1 24 11 H13Z" fill="#ff8f6b"/><rect x="0" y="5" width="12" height="12" rx="1" fill="#c43e1c"/><text x="6" y="15" font-size="10" font-weight="700" fill="#fff" text-anchor="middle" font-family="Liberation Sans">P</text></svg>
<svg style="left:700px;top:1049px" width="24" height="22" viewBox="0 0 24 22"><path d="M2 14 A10 10 0 0 1 22 14" fill="none" stroke="#0000cc" stroke-width="3"/><rect x="0" y="12" width="5" height="9" rx="2" fill="#0000cc"/><rect x="19" y="12" width="5" height="9" rx="2" fill="#0000cc"/><ellipse cx="12" cy="15" rx="6" ry="6" fill="#f8a000"/><path d="M6 15 H18" stroke="#e01010" stroke-width="2"/></svg>
<svg style="left:749px;top:1049px" width="23" height="23" viewBox="0 0 23 23"><circle cx="11.5" cy="11.5" r="11" fill="#302e31" stroke="#ccc" stroke-width="1"/><circle cx="11.5" cy="11.5" r="8.5" fill="none" stroke="#ddd" stroke-width="1.3"/><circle cx="8" cy="8" r="2.6" fill="#ddd"/><circle cx="15.5" cy="9.5" r="2.6" fill="#ddd"/><circle cx="10.5" cy="16" r="2.6" fill="#ddd"/></svg>
<div class="a" style="left:786px;top:1040px;width:48px;height:40px;background:#3c4a55"></div>
<svg style="left:799px;top:1049px" width="23" height="23" viewBox="0 0 23 23"><circle cx="11.5" cy="11.5" r="11" fill="#db4437"/><path d="M11.5 11.5 L1.97 6 A11 11 0 0 1 21.03 6Z" fill="#db4437"/><path d="M11.5 11.5 L21.03 6 A11 11 0 0 1 11.5 22.5Z" fill="#fbc02d"/><path d="M11.5 11.5 L11.5 22.5 A11 11 0 0 1 1.97 6Z" fill="#0f9d58"/><circle cx="11.5" cy="11.5" r="5" fill="#fff"/><circle cx="11.5" cy="11.5" r="4" fill="#4285f4"/></svg>
<div class="a" style="left:790px;top:1077px;width:40px;height:3px;background:#8eb6d6"></div>
<div class="a" style="left:835px;top:1040px;width:1px;height:40px;background:#3a4650"></div>
<svg style="left:847px;top:1049px" width="23" height="23" viewBox="0 0 23 23"><circle cx="11.5" cy="11.5" r="11" fill="#0c7bd6"/><path d="M3 14 Q5 4 14 4 Q21 5 21.5 11 Q19 8 14 9 Q8 10 9 16 Q10 21 17 20 Q13 23 8 21 Q3 19 3 14Z" fill="#50e6a0"/><ellipse cx="15" cy="13" rx="5" ry="3" fill="#0c5aa6"/></svg>
<div class="a" style="left:840px;top:1077px;width:40px;height:3px;background:#8eb6d6"></div>
<svg style="left:896px;top:1049px" width="22" height="23" viewBox="0 0 22 23"><rect x="2" y="0" width="18" height="23" fill="#e8e8f0"/><rect x="4" y="3" width="14" height="10" fill="#5c7cc8"/><path d="M4 16 L18 10" stroke="#b00020" stroke-width="1.5"/><rect x="2" y="18" width="18" height="2" fill="#888"/></svg>
<svg style="left:946px;top:1049px" width="22" height="23" viewBox="0 0 22 23"><rect x="2" y="0" width="18" height="23" fill="#cfe0f0"/><rect x="2" y="0" width="18" height="4" fill="#8fb0d0"/><text x="11" y="15" font-size="9" fill="#4070c0" text-anchor="middle" font-family="Liberation Sans">A</text></svg>
<svg style="left:995px;top:1049px" width="23" height="23" viewBox="0 0 23 23"><circle cx="11.5" cy="11.5" r="11" fill="#1ed760"/><path d="M5 8 Q12 5.5 18.5 9 M6 12 Q12 10 17 12.8 M6.8 15.6 Q11.5 14 16 16.2" fill="none" stroke="#111" stroke-width="1.9" stroke-linecap="round"/></svg>
<div class="a" style="left:741px;top:1077px;width:40px;height:3px;background:#8eb6d6"></div>
<div class="a" style="left:937px;top:1077px;width:40px;height:3px;background:#8eb6d6"></div>
<svg style="left:1643px;top:1054px" width="12" height="8" viewBox="0 0 12 8"><path d="M1 7 L6 2 L11 7" fill="none" stroke="#fff" stroke-width="1.2"/></svg>
<svg style="left:1668px;top:1050px" width="13" height="16" viewBox="0 0 13 16"><rect x="1" y="4" width="7" height="8" rx="1.5" fill="none" stroke="#fff" stroke-width="1.1"/><path d="M8 6 L12 4 V12 L8 10" fill="none" stroke="#fff" stroke-width="1.1"/><path d="M2 1 Q5 0 8 1 M2 15 Q5 16 8 15" stroke="#fff" stroke-width="1" fill="none"/></svg>
<svg style="left:1688px;top:1051px" width="17" height="15" viewBox="0 0 17 15"><path d="M1 5 H4 L8 1 V14 L4 10 H1Z" fill="none" stroke="#fff" stroke-width="1.1"/><path d="M10 4.5 Q12 7.5 10 10.5 M12.5 2.5 Q15.5 7.5 12.5 12.5" fill="none" stroke="#fff" stroke-width="1.1"/></svg>
<svg style="left:1714px;top:1051px" width="14" height="14" viewBox="0 0 14 14"><path d="M1 13 A12 12 0 0 1 13 1 M4 13 A9 9 0 0 1 13 4 M7 13 A6 6 0 0 1 13 7" fill="none" stroke="#fff" stroke-width="1.1"/><circle cx="11.5" cy="11.5" r="1.5" fill="#fff"/></svg>
<svg style="left:1737px;top:1052px" width="24" height="13" viewBox="0 0 24 13"><rect x="0.5" y="0.5" width="23" height="12" fill="none" stroke="#fff" stroke-width="1.1"/><path d="M3 4 H21 M3 6.5 H21 M6 9.5 H18" stroke="#fff" stroke-width="1" stroke-dasharray="1.5 1"/></svg>
<div class="t" style='left:1771.40px;top:1053.14px;font-size:12px;color:#fff;letter-spacing:-1.572px;'>DEU</div>
<div class="t" style='left:1818.98px;top:1044.14px;font-size:12px;color:#fff;'>10:17</div>
<div class="t" style='left:1808.89px;top:1062.14px;font-size:12px;color:#fff;letter-spacing:-0.985px;'>26.02.2021</div>
<svg style="left:1878px;top:1052px" width="19" height="17" viewBox="0 0 19 17"><path d="M0.7 0.7 H18.3 V12.3 H10 L6.5 16 V12.3 H0.7Z" fill="none" stroke="#fff" stroke-width="1.2"/></svg>
<div class="a" style="left:1915px;top:1040px;width:1px;height:40px;background:#4a5560"></div>
</body></html>
